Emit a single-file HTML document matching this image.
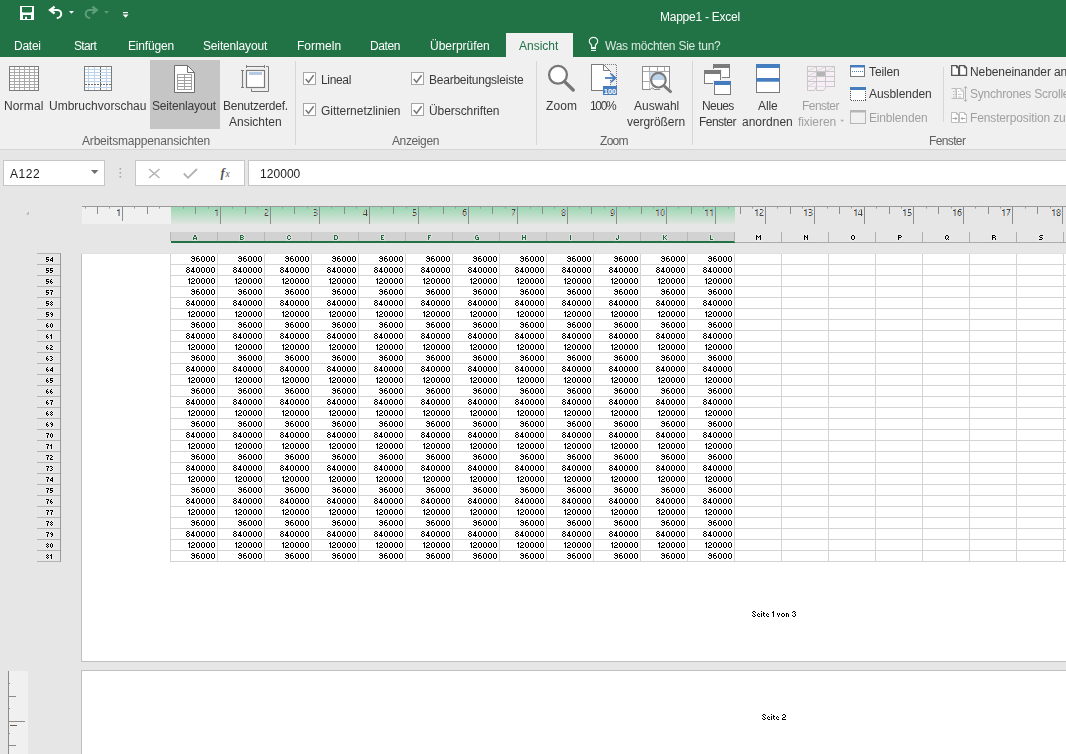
<!DOCTYPE html><html><head><meta charset="utf-8"><style>
*{margin:0;padding:0;box-sizing:border-box}
html,body{width:1066px;height:754px;overflow:hidden;background:#e6e6e6;font-family:"Liberation Sans",sans-serif}
body{position:relative}
.a{position:absolute;white-space:nowrap}
.x{position:absolute;white-space:nowrap;font-family:"Liberation Sans",sans-serif;will-change:transform}
svg{position:absolute;overflow:visible}
</style></head><body><div class="a" style="left:0px;top:0px;width:1066px;height:57px;background:#217346;"></div><div class="a" style="left:506px;top:33px;width:67px;height:24px;background:#f0f0f0;"></div><div class="a" style="left:0px;top:57px;width:1066px;height:92px;background:#f0f0f0;"></div><div class="a" style="left:0px;top:149px;width:1066px;height:1px;background:#d5d5d5;"></div><svg style="left:0;top:0" width="140" height="30">
<rect x="20" y="6" width="14" height="14" fill="#fff"/>
<path d="M22 7h10v4.6l-0.8 0.8h-8.4l-0.8-0.8z" fill="#217346"/>
<path d="M23 15h8v4h-4v-2.2h-2v2.2h-2z" fill="#217346"/>
<path d="M50.5 10.05H57.5A3.93 3.93 0 0 1 57.5 17.9H56.8" fill="none" stroke="#fff" stroke-width="2"/>
<path d="M54.6 6.6L50.1 10.05L54.6 13.5" fill="none" stroke="#fff" stroke-width="2.3"/>
<path d="M69 11h5l-2.5 2.8z" fill="#fff"/>
<path d="M96.4 10.05H89.4A3.93 3.93 0 0 0 89.4 17.9H90.1" fill="none" stroke="#5f9e7b" stroke-width="2"/>
<path d="M92.3 6.6L96.8 10.05L92.3 13.5" fill="none" stroke="#5f9e7b" stroke-width="2.3"/>
<path d="M104 11h5l-2.5 2.8z" fill="#5d9c78"/>
<rect x="123" y="12" width="5" height="1.2" fill="#fff"/>
<path d="M122.6 14.6h6l-3 3.2z" fill="#fff"/>
</svg><svg style="left:0;top:0" width="1066" height="60">
<path d="M591.6 47.5V45.6C591.6 44.4 589.3 43.4 589.3 41.5A4.2 4.2 0 0 1 597.7 41.5C597.7 43.4 595.4 44.4 595.4 45.6V47.5" fill="none" stroke="#eef5f0" stroke-width="1.2"/>
<rect x="591" y="47" width="5" height="2" fill="#eef5f0"/>
<rect x="591" y="49.9" width="5" height="1.1" fill="#eef5f0"/>
</svg><div class="a" style="left:150px;top:60px;width:70px;height:69px;background:#c5c5c5;"></div><svg style="left:0;top:0" width="1066" height="150"><rect x="9.5" y="66.5" width="29" height="24" fill="#fff" stroke="#7b7b7b"/><path d="M14.5 67v23" stroke="#a9a9a9"/><path d="M19.5 67v23" stroke="#a9a9a9"/><path d="M24.5 67v23" stroke="#a9a9a9"/><path d="M29.5 67v23" stroke="#a9a9a9"/><path d="M34.5 67v23" stroke="#a9a9a9"/><path d="M10 69.5h28" stroke="#a9a9a9"/><path d="M10 72.5h28" stroke="#a9a9a9"/><path d="M10 75.5h28" stroke="#a9a9a9"/><path d="M10 78.5h28" stroke="#a9a9a9"/><path d="M10 81.5h28" stroke="#a9a9a9"/><path d="M10 84.5h28" stroke="#a9a9a9"/><path d="M10 87.5h28" stroke="#a9a9a9"/><rect x="84.5" y="66.5" width="27" height="24" fill="#fff"/><path d="M88.5 67v23" stroke="#bcd3ea"/><path d="M94.5 67v23" stroke="#bcd3ea"/><path d="M106.5 67v23" stroke="#bcd3ea"/><path d="M85 69.5h26" stroke="#bcd3ea"/><path d="M85 72.5h26" stroke="#bcd3ea"/><path d="M85 75.5h26" stroke="#bcd3ea"/><path d="M85 78.5h26" stroke="#bcd3ea"/><path d="M85 81.5h26" stroke="#bcd3ea"/><path d="M85 87.5h26" stroke="#bcd3ea"/><path d="M100.5 67v23" stroke="#6a6a6a" stroke-dasharray="2 1"/><path d="M85 84.5h26" stroke="#6a6a6a" stroke-dasharray="2 1"/><rect x="84.5" y="66.5" width="27" height="24" fill="none" stroke="#7b7b7b"/><path d="M174.5 65.5h13l7 7v20h-20z" fill="#fff" stroke="#6f6f6f"/><path d="M187.5 65.5v7h7" fill="none" stroke="#6f6f6f"/><rect x="177.5" y="74.5" width="14" height="15" fill="#fff" stroke="#a0a0a0"/><path d="M184.5 75v14" stroke="#a0a0a0"/><path d="M178 77.5h13" stroke="#a0a0a0"/><path d="M178 80.5h13" stroke="#a0a0a0"/><path d="M178 83.5h13" stroke="#a0a0a0"/><path d="M178 86.5h13" stroke="#a0a0a0"/><rect x="246.5" y="70.5" width="18" height="17" fill="#fff" stroke="#7b7b7b" stroke-width="1.2"/><rect x="249" y="72" width="13" height="3" fill="#b4cbe3"/><path d="M242.5 70v18M241 70.5h3M241 87.5h3" stroke="#7b7b7b" stroke-width="1.1"/><path d="M246 66.5h19M246.5 65v3M264.5 65v3" stroke="#7b7b7b"/><path d="M251.5 88.8v2.7h17V66.5h-2.5" fill="none" stroke="#7b7b7b"/><path d="M295.5 61v84" stroke="#d7d7d7"/><path d="M536.5 61v84" stroke="#d7d7d7"/><path d="M692.5 61v84" stroke="#d7d7d7"/><path d="M943.5 67v55" stroke="#d7d7d7"/><rect x="303.5" y="72.5" width="12" height="12" fill="#fff" stroke="#a6a6a6"/><path d="M305.7 79.1l2.8 3.1l5.1-6.9" fill="none" stroke="#777" stroke-width="1.5"/><rect x="303.5" y="103.5" width="12" height="12" fill="#fff" stroke="#a6a6a6"/><path d="M305.7 110.1l2.8 3.1l5.1-6.9" fill="none" stroke="#777" stroke-width="1.5"/><rect x="411.5" y="72.5" width="12" height="12" fill="#fff" stroke="#a6a6a6"/><path d="M413.7 79.1l2.8 3.1l5.1-6.9" fill="none" stroke="#777" stroke-width="1.5"/><rect x="411.5" y="103.5" width="12" height="12" fill="#fff" stroke="#a6a6a6"/><path d="M413.7 110.1l2.8 3.1l5.1-6.9" fill="none" stroke="#777" stroke-width="1.5"/><circle cx="558" cy="74.8" r="8.9" fill="#fff" stroke="#767676" stroke-width="2.3"/><path d="M564.6 81.6l8.6 8.4" stroke="#767676" stroke-width="3.4" stroke-linecap="round"/><path d="M591.5 64.5h12l7 7v0M610.5 71.5M591.5 64.5v26h12" fill="#fff" stroke="#7b7b7b"/><path d="M592 65h11.5l6.5 6.5v19h-18z" fill="#fff"/><path d="M591.5 64.5h12l7 7M591.5 64.5v26h12" fill="none" stroke="#7b7b7b"/><path d="M603.5 64.5v6h6" fill="none" stroke="#7b7b7b"/><path d="M605 64.5h12M616.5 65v21M610.5 71v4M610.5 80v5" fill="none" stroke="#7b7b7b" stroke-dasharray="1 1" shape-rendering="crispEdges"/><path d="M605 78h9" stroke="#467dbf" stroke-width="1.8"/><path d="M611 73.8l4.4 4.2l-4.4 4.2" fill="none" stroke="#467dbf" stroke-width="1.8"/><rect x="603" y="86" width="14" height="9" fill="#467dbf"/><text x="610" y="93.6" font-family="Liberation Sans" font-size="7.5" font-weight="bold" fill="#fff" text-anchor="middle">100</text><path d="M642.5 89.5v-23h27v21" fill="#fff" stroke="#8a8a8a"/><path d="M643 67h26v21h-26z" fill="#fff"/><path d="M642.5 66.5h27v22M642.5 66.5v23h8l1-1.5h1.5l1 1.5h6" fill="none" stroke="#8a8a8a"/><path d="M649.5 67v4" stroke="#a9a9a9"/><path d="M657.5 67v4" stroke="#a9a9a9"/><path d="M664.5 67v4" stroke="#a9a9a9"/><path d="M643 71.5h26M643 81.5h6" stroke="#a9a9a9"/><path d="M649.5 72v17" stroke="#c0c0c0"/><rect x="650" y="72" width="6" height="5" fill="#c6daf0"/><circle cx="658.4" cy="80.2" r="8.6" fill="#fff"/><path d="M652 80a6.4 6.4 0 0 1 12.8 0z" fill="#bcd3ea"/><circle cx="658.4" cy="80.2" r="7.3" fill="none" stroke="#7b7b7b" stroke-width="2.2"/><path d="M664.2 86l6.3 5.6" stroke="#7b7b7b" stroke-width="3" stroke-linecap="round"/><rect x="713.5" y="64.5" width="16" height="13" fill="#fff" stroke="#7b7b7b"/><rect x="713" y="64" width="17" height="4" fill="#7b7b7b"/><rect x="703" y="69" width="19" height="16" fill="#f0f0f0"/><rect x="704.5" y="70.5" width="16" height="13" fill="#fff" stroke="#7b7b7b"/><rect x="704" y="70" width="17" height="4" fill="#7b7b7b"/><rect x="713" y="80" width="19" height="16" fill="#f0f0f0"/><rect x="714.5" y="81.5" width="16" height="13" fill="#fff" stroke="#7b7b7b"/><rect x="714" y="81" width="17" height="4" fill="#467dbf"/><rect x="756.5" y="64.5" width="23" height="28" fill="#fff" stroke="#7b7b7b"/><rect x="756" y="64" width="24" height="4" fill="#467dbf"/><rect x="756" y="78" width="24" height="3.7" fill="#467dbf"/><rect x="807.5" y="66.5" width="27" height="20" fill="#f7eff5" stroke="#c8c8c8"/><path d="M816.5 67v19" stroke="#c8c8c8"/><path d="M825.5 67v19" stroke="#c8c8c8"/><path d="M808 71.5h26" stroke="#c8c8c8"/><path d="M808 76.5h26" stroke="#c8c8c8"/><path d="M808 81.5h26" stroke="#c8c8c8"/><rect x="817" y="72" width="8" height="4" fill="#b5b5b5"/><path d="M808 71l8-4M808 76l8-4M808 81l8-4M808 86l8-4M817 71l8-4M826 71l8-4" stroke="#cfcfcf" stroke-width="0.8"/><path d="M807.5 86.5v4h7l2-4M816.5 86.5v4h7l3-4" fill="#f7eff5" stroke="#c8c8c8"/><path d="M840.2 119.8h4l-2 2.2z" fill="#b0b0b0"/><rect x="850.5" y="65.5" width="14" height="11" fill="#fff" stroke="#7b7b7b"/><rect x="850" y="65" width="15" height="2.5" fill="#467dbf"/><path d="M852 71.5h11" stroke="#467dbf" stroke-dasharray="1 1"/><rect x="850.5" y="87.5" width="15" height="13" fill="#fff" stroke="#555" stroke-dasharray="1 1" shape-rendering="crispEdges"/><rect x="850" y="87" width="16" height="3" fill="#467dbf"/><rect x="850.5" y="110.5" width="15" height="13" fill="none" stroke="#b5b5b5"/><rect x="850" y="110" width="16" height="2.5" fill="#b5b5b5"/><path d="M951.7 65.7h5l2 2v7.6h-7z M959.5 65.7h5l2 2v7.6h-7z" fill="#fff" stroke="#555" stroke-width="1.3"/><path d="M956.5 65.7v2.2h2.2M964.3 65.7v2.2h2.2" fill="none" stroke="#555" stroke-width="1"/><path d="M951.5 88.5h4.5v10h-4.5" fill="none" stroke="#bdbdbd"/><path d="M956.5 88.5h4.5l2.5 2.5v7.5h-7z" fill="#fff" stroke="#bdbdbd"/><path d="M953 91.5h1.5M953 94.5h1.5M953 97h1.5M958 91.5h1M958 94.5h3.5M958 97h3.5M961 88.5v2.5h2.5" fill="none" stroke="#c4c4c4"/><path d="M965.5 86.5v15M963.8 88.3l1.7-1.8l1.7 1.8M963.8 99.7l1.7 1.8l1.7-1.8" fill="none" stroke="#b5b5b5"/><path d="M951.5 112.5h5l2 2v8h-7z M959.5 112.5h5l2 2v8h-7z" fill="#fff" stroke="#bdbdbd"/><path d="M956.5 112.5v2h2M964.5 112.5v2h2" fill="none" stroke="#bdbdbd"/><path d="M952.5 118.5h4.5M955.3 117l1.5 1.5l-1.5 1.5M965.5 118.5h-4.5M962.7 117l-1.5 1.5l1.5 1.5" fill="none" stroke="#a8a8a8"/></svg><div class="a" style="left:3px;top:160px;width:102px;height:26px;background:#fff;border:1px solid #c6c6c6"></div><div class="a" style="left:135px;top:160px;width:110px;height:26px;background:#fff;border:1px solid #c6c6c6"></div><div class="a" style="left:248px;top:160px;width:830px;height:26px;background:#fff;border:1px solid #c6c6c6"></div><svg style="left:0;top:0" width="1066" height="260"><path d="M91 170h7.4l-3.7 4z" fill="#6d6d6d"/><rect x="119.5" y="168" width="1.6" height="1.6" fill="#a8a8a8"/><rect x="119.5" y="172" width="1.6" height="1.6" fill="#a8a8a8"/><rect x="119.5" y="176" width="1.6" height="1.6" fill="#a8a8a8"/><path d="M149 169l10.5 9M159.5 169l-10.5 9" stroke="#b0b0b0" stroke-width="1.4"/><path d="M183.8 173.5l4.2 4.3l9-8.8" fill="none" stroke="#b0b0b0" stroke-width="1.8"/><text x="220.5" y="177" font-family="Liberation Serif" font-style="italic" font-weight="bold" font-size="13" fill="#555">f</text><text x="225.5" y="177" font-family="Liberation Serif" font-style="italic" font-size="9.5" fill="#555">x</text><path d="M29 211.5v3h-3z" fill="#b0b0b0"/></svg><div class="a" style="left:81px;top:253px;width:985px;height:1px;background:#e1e1e1;"></div><div class="a" style="left:81px;top:254px;width:985px;height:408px;background:#fff;border-left:1px solid #c0c0c0;border-bottom:1px solid #c0c0c0"></div><div class="a" style="left:81px;top:670px;width:985px;height:84px;background:#fff;border-left:1px solid #c0c0c0;border-top:1px solid #c0c0c0"></div><div class="a" style="left:82px;top:206px;width:89px;height:18px;background:#f0f0f0;"></div><div class="a" style="left:171px;top:206px;width:564px;height:18px;background:linear-gradient(#98d6af,#dfe5e0)"></div><div class="a" style="left:82px;top:206px;width:984px;height:1px;background:#9a9a9a;"></div><svg style="left:0;top:0" width="1066" height="260"><path d="M85.5 207v1.6" stroke="#9a9a9a"/><path d="M97.5 207v7" stroke="#8c8c8c"/><path d="M109.5 207v1.6" stroke="#9a9a9a"/><path d="M122.5 207v14" stroke="#8c8c8c"/><path d="M134.5 207v1.6" stroke="#9a9a9a"/><path d="M147.5 207v7" stroke="#8c8c8c"/><path d="M159.5 207v1.6" stroke="#9a9a9a"/><path d="M183.5 207v1.6" stroke="#9a9a9a"/><path d="M195.5 207v7" stroke="#8c8c8c"/><path d="M208.5 207v1.6" stroke="#9a9a9a"/><path d="M220.5 207v17" stroke="#8c8c8c"/><path d="M232.5 207v1.6" stroke="#9a9a9a"/><path d="M245.5 207v7" stroke="#8c8c8c"/><path d="M257.5 207v1.6" stroke="#9a9a9a"/><path d="M270.5 207v17" stroke="#8c8c8c"/><path d="M282.5 207v1.6" stroke="#9a9a9a"/><path d="M294.5 207v7" stroke="#8c8c8c"/><path d="M307.5 207v1.6" stroke="#9a9a9a"/><path d="M319.5 207v17" stroke="#8c8c8c"/><path d="M331.5 207v1.6" stroke="#9a9a9a"/><path d="M344.5 207v7" stroke="#8c8c8c"/><path d="M356.5 207v1.6" stroke="#9a9a9a"/><path d="M369.5 207v17" stroke="#8c8c8c"/><path d="M381.5 207v1.6" stroke="#9a9a9a"/><path d="M393.5 207v7" stroke="#8c8c8c"/><path d="M406.5 207v1.6" stroke="#9a9a9a"/><path d="M418.5 207v17" stroke="#8c8c8c"/><path d="M430.5 207v1.6" stroke="#9a9a9a"/><path d="M443.5 207v7" stroke="#8c8c8c"/><path d="M455.5 207v1.6" stroke="#9a9a9a"/><path d="M468.5 207v17" stroke="#8c8c8c"/><path d="M480.5 207v1.6" stroke="#9a9a9a"/><path d="M492.5 207v7" stroke="#8c8c8c"/><path d="M505.5 207v1.6" stroke="#9a9a9a"/><path d="M517.5 207v17" stroke="#8c8c8c"/><path d="M530.5 207v1.6" stroke="#9a9a9a"/><path d="M542.5 207v7" stroke="#8c8c8c"/><path d="M554.5 207v1.6" stroke="#9a9a9a"/><path d="M567.5 207v17" stroke="#8c8c8c"/><path d="M579.5 207v1.6" stroke="#9a9a9a"/><path d="M591.5 207v7" stroke="#8c8c8c"/><path d="M604.5 207v1.6" stroke="#9a9a9a"/><path d="M616.5 207v17" stroke="#8c8c8c"/><path d="M629.5 207v1.6" stroke="#9a9a9a"/><path d="M641.5 207v7" stroke="#8c8c8c"/><path d="M653.5 207v1.6" stroke="#9a9a9a"/><path d="M666.5 207v17" stroke="#8c8c8c"/><path d="M678.5 207v1.6" stroke="#9a9a9a"/><path d="M691.5 207v7" stroke="#8c8c8c"/><path d="M703.5 207v1.6" stroke="#9a9a9a"/><path d="M715.5 207v17" stroke="#8c8c8c"/><path d="M728.5 207v1.6" stroke="#9a9a9a"/><path d="M740.5 207v7" stroke="#8c8c8c"/><path d="M752.5 207v1.6" stroke="#9a9a9a"/><path d="M765.5 207v17" stroke="#8c8c8c"/><path d="M777.5 207v1.6" stroke="#9a9a9a"/><path d="M790.5 207v7" stroke="#8c8c8c"/><path d="M802.5 207v1.6" stroke="#9a9a9a"/><path d="M814.5 207v17" stroke="#8c8c8c"/><path d="M827.5 207v1.6" stroke="#9a9a9a"/><path d="M839.5 207v7" stroke="#8c8c8c"/><path d="M851.5 207v1.6" stroke="#9a9a9a"/><path d="M864.5 207v17" stroke="#8c8c8c"/><path d="M876.5 207v1.6" stroke="#9a9a9a"/><path d="M889.5 207v7" stroke="#8c8c8c"/><path d="M901.5 207v1.6" stroke="#9a9a9a"/><path d="M913.5 207v17" stroke="#8c8c8c"/><path d="M926.5 207v1.6" stroke="#9a9a9a"/><path d="M938.5 207v7" stroke="#8c8c8c"/><path d="M951.5 207v1.6" stroke="#9a9a9a"/><path d="M963.5 207v17" stroke="#8c8c8c"/><path d="M975.5 207v1.6" stroke="#9a9a9a"/><path d="M988.5 207v7" stroke="#8c8c8c"/><path d="M1000.5 207v1.6" stroke="#9a9a9a"/><path d="M1012.5 207v17" stroke="#8c8c8c"/><path d="M1025.5 207v1.6" stroke="#9a9a9a"/><path d="M1037.5 207v7" stroke="#8c8c8c"/><path d="M1050.5 207v1.6" stroke="#9a9a9a"/><path d="M1062.5 207v17" stroke="#8c8c8c"/></svg><svg style="left:0;top:0" width="1066" height="260" shape-rendering="crispEdges"><path fill="#d9a466" d="M118 209h1v1h-1zM118 211h1v1h-1zM118 212h1v1h-1zM118 213h1v1h-1zM118 214h1v1h-1zM118 215h1v1h-1zM216 209h1v1h-1zM216 211h1v1h-1zM216 212h1v1h-1zM216 213h1v1h-1zM216 214h1v1h-1zM216 215h1v1h-1zM267 210h1v1h-1zM267 211h1v1h-1zM266 212h1v1h-1zM264 214h1v1h-1zM264 215h1v1h-1zM313 209h1v1h-1zM316 210h1v1h-1zM316 211h1v1h-1zM316 213h1v1h-1zM316 214h1v1h-1zM313 215h1v1h-1zM365 209h1v1h-1zM364 210h1v1h-1zM363 212h1v1h-1zM363 213h1v1h-1zM415 213h1v1h-1zM415 214h1v1h-1zM412 215h1v1h-1zM462 211h1v1h-1zM462 212h1v1h-1zM465 212h1v1h-1zM462 213h1v1h-1zM465 213h1v1h-1zM462 214h1v1h-1zM465 214h1v1h-1zM463 215h1v1h-1zM511 209h1v1h-1zM513 211h1v1h-1zM513 212h1v1h-1zM512 213h1v1h-1zM512 214h1v1h-1zM512 215h1v1h-1zM562 209h1v1h-1zM561 210h1v1h-1zM564 210h1v1h-1zM561 211h1v1h-1zM564 211h1v1h-1zM562 212h1v1h-1zM561 213h1v1h-1zM564 213h1v1h-1zM561 214h1v1h-1zM564 214h1v1h-1zM611 209h1v1h-1zM610 210h1v1h-1zM613 210h1v1h-1zM610 211h1v1h-1zM613 211h1v1h-1zM610 212h1v1h-1zM613 212h1v1h-1zM613 213h1v1h-1zM613 214h1v1h-1zM610 215h1v1h-1zM661 209h1v1h-1zM660 210h1v1h-1zM663 210h1v1h-1zM660 211h1v1h-1zM663 211h1v1h-1zM660 212h1v1h-1zM663 212h1v1h-1zM660 213h1v1h-1zM663 213h1v1h-1zM660 214h1v1h-1zM663 214h1v1h-1zM661 215h1v1h-1zM657 209h1v1h-1zM657 211h1v1h-1zM657 212h1v1h-1zM657 213h1v1h-1zM657 214h1v1h-1zM657 215h1v1h-1zM711 209h1v1h-1zM711 211h1v1h-1zM711 212h1v1h-1zM711 213h1v1h-1zM711 214h1v1h-1zM711 215h1v1h-1zM706 209h1v1h-1zM706 211h1v1h-1zM706 212h1v1h-1zM706 213h1v1h-1zM706 214h1v1h-1zM706 215h1v1h-1zM762 210h1v1h-1zM762 211h1v1h-1zM761 212h1v1h-1zM759 214h1v1h-1zM759 215h1v1h-1zM756 209h1v1h-1zM756 211h1v1h-1zM756 212h1v1h-1zM756 213h1v1h-1zM756 214h1v1h-1zM756 215h1v1h-1zM808 209h1v1h-1zM811 210h1v1h-1zM811 211h1v1h-1zM811 213h1v1h-1zM811 214h1v1h-1zM808 215h1v1h-1zM805 209h1v1h-1zM805 211h1v1h-1zM805 212h1v1h-1zM805 213h1v1h-1zM805 214h1v1h-1zM805 215h1v1h-1zM860 209h1v1h-1zM859 210h1v1h-1zM858 212h1v1h-1zM858 213h1v1h-1zM855 209h1v1h-1zM855 211h1v1h-1zM855 212h1v1h-1zM855 213h1v1h-1zM855 214h1v1h-1zM855 215h1v1h-1zM910 213h1v1h-1zM910 214h1v1h-1zM907 215h1v1h-1zM904 209h1v1h-1zM904 211h1v1h-1zM904 212h1v1h-1zM904 213h1v1h-1zM904 214h1v1h-1zM904 215h1v1h-1zM957 211h1v1h-1zM957 212h1v1h-1zM960 212h1v1h-1zM957 213h1v1h-1zM960 213h1v1h-1zM957 214h1v1h-1zM960 214h1v1h-1zM958 215h1v1h-1zM954 209h1v1h-1zM954 211h1v1h-1zM954 212h1v1h-1zM954 213h1v1h-1zM954 214h1v1h-1zM954 215h1v1h-1zM1006 209h1v1h-1zM1008 211h1v1h-1zM1008 212h1v1h-1zM1007 213h1v1h-1zM1007 214h1v1h-1zM1007 215h1v1h-1zM1003 209h1v1h-1zM1003 211h1v1h-1zM1003 212h1v1h-1zM1003 213h1v1h-1zM1003 214h1v1h-1zM1003 215h1v1h-1zM1057 209h1v1h-1zM1056 210h1v1h-1zM1059 210h1v1h-1zM1056 211h1v1h-1zM1059 211h1v1h-1zM1057 212h1v1h-1zM1056 213h1v1h-1zM1059 213h1v1h-1zM1056 214h1v1h-1zM1059 214h1v1h-1zM1053 209h1v1h-1zM1053 211h1v1h-1zM1053 212h1v1h-1zM1053 213h1v1h-1zM1053 214h1v1h-1zM1053 215h1v1h-1z"/><path fill="#62a2e2" d="M119 209h1v1h-1zM119 210h1v1h-1zM119 211h1v1h-1zM119 212h1v1h-1zM119 213h1v1h-1zM119 214h1v1h-1zM119 215h1v1h-1zM217 209h1v1h-1zM217 210h1v1h-1zM217 211h1v1h-1zM217 212h1v1h-1zM217 213h1v1h-1zM217 214h1v1h-1zM217 215h1v1h-1zM267 209h1v1h-1zM268 210h1v1h-1zM267 212h1v1h-1zM266 213h1v1h-1zM265 214h1v1h-1zM268 215h1v1h-1zM316 209h1v1h-1zM317 210h1v1h-1zM316 212h1v1h-1zM317 213h1v1h-1zM317 214h1v1h-1zM316 215h1v1h-1zM366 209h1v1h-1zM364 211h1v1h-1zM367 214h1v1h-1zM413 210h1v1h-1zM413 211h1v1h-1zM416 213h1v1h-1zM416 214h1v1h-1zM415 215h1v1h-1zM466 209h1v1h-1zM463 212h1v1h-1zM466 212h1v1h-1zM463 213h1v1h-1zM466 213h1v1h-1zM463 214h1v1h-1zM466 214h1v1h-1zM465 215h1v1h-1zM515 209h1v1h-1zM514 211h1v1h-1zM514 212h1v1h-1zM513 213h1v1h-1zM513 214h1v1h-1zM564 209h1v1h-1zM562 210h1v1h-1zM565 210h1v1h-1zM562 211h1v1h-1zM565 211h1v1h-1zM564 212h1v1h-1zM562 213h1v1h-1zM565 213h1v1h-1zM562 214h1v1h-1zM565 214h1v1h-1zM613 209h1v1h-1zM611 210h1v1h-1zM614 210h1v1h-1zM611 211h1v1h-1zM614 211h1v1h-1zM611 212h1v1h-1zM614 212h1v1h-1zM614 213h1v1h-1zM614 214h1v1h-1zM613 215h1v1h-1zM663 209h1v1h-1zM661 210h1v1h-1zM664 210h1v1h-1zM661 211h1v1h-1zM664 211h1v1h-1zM661 212h1v1h-1zM664 212h1v1h-1zM661 213h1v1h-1zM664 213h1v1h-1zM661 214h1v1h-1zM664 214h1v1h-1zM663 215h1v1h-1zM658 209h1v1h-1zM658 210h1v1h-1zM658 211h1v1h-1zM658 212h1v1h-1zM658 213h1v1h-1zM658 214h1v1h-1zM658 215h1v1h-1zM712 209h1v1h-1zM712 210h1v1h-1zM712 211h1v1h-1zM712 212h1v1h-1zM712 213h1v1h-1zM712 214h1v1h-1zM712 215h1v1h-1zM707 209h1v1h-1zM707 210h1v1h-1zM707 211h1v1h-1zM707 212h1v1h-1zM707 213h1v1h-1zM707 214h1v1h-1zM707 215h1v1h-1zM762 209h1v1h-1zM763 210h1v1h-1zM762 212h1v1h-1zM761 213h1v1h-1zM760 214h1v1h-1zM763 215h1v1h-1zM757 209h1v1h-1zM757 210h1v1h-1zM757 211h1v1h-1zM757 212h1v1h-1zM757 213h1v1h-1zM757 214h1v1h-1zM757 215h1v1h-1zM811 209h1v1h-1zM812 210h1v1h-1zM811 212h1v1h-1zM812 213h1v1h-1zM812 214h1v1h-1zM811 215h1v1h-1zM806 209h1v1h-1zM806 210h1v1h-1zM806 211h1v1h-1zM806 212h1v1h-1zM806 213h1v1h-1zM806 214h1v1h-1zM806 215h1v1h-1zM861 209h1v1h-1zM859 211h1v1h-1zM862 214h1v1h-1zM856 209h1v1h-1zM856 210h1v1h-1zM856 211h1v1h-1zM856 212h1v1h-1zM856 213h1v1h-1zM856 214h1v1h-1zM856 215h1v1h-1zM908 210h1v1h-1zM908 211h1v1h-1zM911 213h1v1h-1zM911 214h1v1h-1zM910 215h1v1h-1zM905 209h1v1h-1zM905 210h1v1h-1zM905 211h1v1h-1zM905 212h1v1h-1zM905 213h1v1h-1zM905 214h1v1h-1zM905 215h1v1h-1zM961 209h1v1h-1zM958 212h1v1h-1zM961 212h1v1h-1zM958 213h1v1h-1zM961 213h1v1h-1zM958 214h1v1h-1zM961 214h1v1h-1zM960 215h1v1h-1zM955 209h1v1h-1zM955 210h1v1h-1zM955 211h1v1h-1zM955 212h1v1h-1zM955 213h1v1h-1zM955 214h1v1h-1zM955 215h1v1h-1zM1010 209h1v1h-1zM1009 211h1v1h-1zM1009 212h1v1h-1zM1008 213h1v1h-1zM1008 214h1v1h-1zM1004 209h1v1h-1zM1004 210h1v1h-1zM1004 211h1v1h-1zM1004 212h1v1h-1zM1004 213h1v1h-1zM1004 214h1v1h-1zM1004 215h1v1h-1zM1059 209h1v1h-1zM1057 210h1v1h-1zM1060 210h1v1h-1zM1057 211h1v1h-1zM1060 211h1v1h-1zM1059 212h1v1h-1zM1057 213h1v1h-1zM1060 213h1v1h-1zM1057 214h1v1h-1zM1060 214h1v1h-1zM1054 209h1v1h-1zM1054 210h1v1h-1zM1054 211h1v1h-1zM1054 212h1v1h-1zM1054 213h1v1h-1zM1054 214h1v1h-1zM1054 215h1v1h-1z"/><path fill="#4f4239" d="M117 210h1v1h-1zM118 210h1v1h-1zM215 210h1v1h-1zM216 210h1v1h-1zM265 209h1v1h-1zM266 209h1v1h-1zM265 213h1v1h-1zM265 215h1v1h-1zM266 215h1v1h-1zM267 215h1v1h-1zM314 209h1v1h-1zM315 209h1v1h-1zM314 212h1v1h-1zM315 212h1v1h-1zM314 215h1v1h-1zM315 215h1v1h-1zM366 210h1v1h-1zM366 211h1v1h-1zM366 212h1v1h-1zM366 213h1v1h-1zM363 214h1v1h-1zM364 214h1v1h-1zM365 214h1v1h-1zM366 214h1v1h-1zM366 215h1v1h-1zM413 209h1v1h-1zM414 209h1v1h-1zM415 209h1v1h-1zM413 212h1v1h-1zM414 212h1v1h-1zM415 212h1v1h-1zM413 215h1v1h-1zM414 215h1v1h-1zM464 209h1v1h-1zM465 209h1v1h-1zM463 210h1v1h-1zM463 211h1v1h-1zM464 211h1v1h-1zM465 211h1v1h-1zM464 215h1v1h-1zM512 209h1v1h-1zM513 209h1v1h-1zM514 209h1v1h-1zM514 210h1v1h-1zM563 209h1v1h-1zM563 212h1v1h-1zM562 215h1v1h-1zM563 215h1v1h-1zM564 215h1v1h-1zM612 209h1v1h-1zM611 213h1v1h-1zM612 213h1v1h-1zM611 215h1v1h-1zM612 215h1v1h-1zM662 209h1v1h-1zM662 215h1v1h-1zM656 210h1v1h-1zM657 210h1v1h-1zM710 210h1v1h-1zM711 210h1v1h-1zM705 210h1v1h-1zM706 210h1v1h-1zM760 209h1v1h-1zM761 209h1v1h-1zM760 213h1v1h-1zM760 215h1v1h-1zM761 215h1v1h-1zM762 215h1v1h-1zM755 210h1v1h-1zM756 210h1v1h-1zM809 209h1v1h-1zM810 209h1v1h-1zM809 212h1v1h-1zM810 212h1v1h-1zM809 215h1v1h-1zM810 215h1v1h-1zM804 210h1v1h-1zM805 210h1v1h-1zM861 210h1v1h-1zM861 211h1v1h-1zM861 212h1v1h-1zM861 213h1v1h-1zM858 214h1v1h-1zM859 214h1v1h-1zM860 214h1v1h-1zM861 214h1v1h-1zM861 215h1v1h-1zM854 210h1v1h-1zM855 210h1v1h-1zM908 209h1v1h-1zM909 209h1v1h-1zM910 209h1v1h-1zM908 212h1v1h-1zM909 212h1v1h-1zM910 212h1v1h-1zM908 215h1v1h-1zM909 215h1v1h-1zM903 210h1v1h-1zM904 210h1v1h-1zM959 209h1v1h-1zM960 209h1v1h-1zM958 210h1v1h-1zM958 211h1v1h-1zM959 211h1v1h-1zM960 211h1v1h-1zM959 215h1v1h-1zM953 210h1v1h-1zM954 210h1v1h-1zM1007 209h1v1h-1zM1008 209h1v1h-1zM1009 209h1v1h-1zM1009 210h1v1h-1zM1002 210h1v1h-1zM1003 210h1v1h-1zM1058 209h1v1h-1zM1058 212h1v1h-1zM1057 215h1v1h-1zM1058 215h1v1h-1zM1059 215h1v1h-1zM1052 210h1v1h-1zM1053 210h1v1h-1z"/></svg><div class="a" style="left:171px;top:232px;width:564px;height:9px;background:#d2d2d2;"></div><div class="a" style="left:171px;top:241px;width:564px;height:2px;background:#217346;"></div><div class="a" style="left:735px;top:242px;width:331px;height:1px;background:#ababab;"></div><svg style="left:0;top:0" width="1066" height="260"><path d="M170.5 232v9" stroke="#b7b7b7"/><path d="M217.5 232v9" stroke="#b7b7b7"/><path d="M264.5 232v9" stroke="#b7b7b7"/><path d="M311.5 232v9" stroke="#b7b7b7"/><path d="M358.5 232v9" stroke="#b7b7b7"/><path d="M405.5 232v9" stroke="#b7b7b7"/><path d="M452.5 232v9" stroke="#b7b7b7"/><path d="M499.5 232v9" stroke="#b7b7b7"/><path d="M546.5 232v9" stroke="#b7b7b7"/><path d="M593.5 232v9" stroke="#b7b7b7"/><path d="M640.5 232v9" stroke="#b7b7b7"/><path d="M687.5 232v9" stroke="#b7b7b7"/><path d="M734.5 232v10" stroke="#b0b0b0"/><path d="M781.5 232v10" stroke="#b0b0b0"/><path d="M828.5 232v10" stroke="#b0b0b0"/><path d="M875.5 232v10" stroke="#b0b0b0"/><path d="M922.5 232v10" stroke="#b0b0b0"/><path d="M969.5 232v10" stroke="#b0b0b0"/><path d="M1016.5 232v10" stroke="#b0b0b0"/><path d="M1063.5 232v10" stroke="#b0b0b0"/></svg><svg style="left:0;top:0" width="1066" height="260" shape-rendering="crispEdges"><path fill="rgba(255,255,255,0.3)" d="M192 236h1v1h-1zM192 237h1v1h-1zM192 238h1v1h-1zM192 239h1v1h-1zM192 240h1v1h-1zM193 234h1v1h-1zM193 235h1v1h-1zM193 236h1v1h-1zM193 240h1v1h-1zM194 234h1v1h-1zM194 237h1v1h-1zM194 239h1v1h-1zM194 240h1v1h-1zM195 234h1v1h-1zM195 237h1v1h-1zM195 239h1v1h-1zM195 240h1v1h-1zM196 234h1v1h-1zM196 235h1v1h-1zM196 236h1v1h-1zM196 240h1v1h-1zM197 236h1v1h-1zM197 237h1v1h-1zM197 238h1v1h-1zM197 239h1v1h-1zM197 240h1v1h-1zM239 234h1v1h-1zM239 235h1v1h-1zM239 236h1v1h-1zM239 237h1v1h-1zM239 238h1v1h-1zM239 239h1v1h-1zM239 240h1v1h-1zM240 234h1v1h-1zM240 240h1v1h-1zM241 234h1v1h-1zM241 236h1v1h-1zM241 238h1v1h-1zM241 240h1v1h-1zM242 234h1v1h-1zM242 236h1v1h-1zM242 238h1v1h-1zM242 240h1v1h-1zM243 234h1v1h-1zM243 235h1v1h-1zM243 237h1v1h-1zM243 239h1v1h-1zM243 240h1v1h-1zM244 235h1v1h-1zM244 236h1v1h-1zM244 237h1v1h-1zM244 238h1v1h-1zM244 239h1v1h-1zM286 235h1v1h-1zM286 236h1v1h-1zM286 237h1v1h-1zM286 238h1v1h-1zM286 239h1v1h-1zM287 234h1v1h-1zM287 235h1v1h-1zM287 239h1v1h-1zM287 240h1v1h-1zM288 234h1v1h-1zM288 236h1v1h-1zM288 237h1v1h-1zM288 238h1v1h-1zM288 240h1v1h-1zM289 234h1v1h-1zM289 236h1v1h-1zM289 237h1v1h-1zM289 238h1v1h-1zM289 240h1v1h-1zM290 234h1v1h-1zM290 235h1v1h-1zM290 237h1v1h-1zM290 239h1v1h-1zM290 240h1v1h-1zM291 235h1v1h-1zM291 236h1v1h-1zM291 237h1v1h-1zM291 238h1v1h-1zM291 239h1v1h-1zM333 234h1v1h-1zM333 235h1v1h-1zM333 236h1v1h-1zM333 237h1v1h-1zM333 238h1v1h-1zM333 239h1v1h-1zM333 240h1v1h-1zM334 234h1v1h-1zM334 240h1v1h-1zM335 234h1v1h-1zM335 236h1v1h-1zM335 237h1v1h-1zM335 238h1v1h-1zM335 240h1v1h-1zM336 234h1v1h-1zM336 236h1v1h-1zM336 237h1v1h-1zM336 238h1v1h-1zM336 240h1v1h-1zM337 234h1v1h-1zM337 235h1v1h-1zM337 239h1v1h-1zM337 240h1v1h-1zM338 235h1v1h-1zM338 236h1v1h-1zM338 237h1v1h-1zM338 238h1v1h-1zM338 239h1v1h-1zM380 234h1v1h-1zM380 235h1v1h-1zM380 236h1v1h-1zM380 237h1v1h-1zM380 238h1v1h-1zM380 239h1v1h-1zM380 240h1v1h-1zM381 234h1v1h-1zM381 240h1v1h-1zM382 234h1v1h-1zM382 236h1v1h-1zM382 238h1v1h-1zM382 240h1v1h-1zM383 234h1v1h-1zM383 236h1v1h-1zM383 237h1v1h-1zM383 238h1v1h-1zM383 240h1v1h-1zM384 234h1v1h-1zM384 235h1v1h-1zM384 236h1v1h-1zM384 238h1v1h-1zM384 239h1v1h-1zM384 240h1v1h-1zM427 234h1v1h-1zM427 235h1v1h-1zM427 236h1v1h-1zM427 237h1v1h-1zM427 238h1v1h-1zM427 239h1v1h-1zM427 240h1v1h-1zM428 234h1v1h-1zM428 240h1v1h-1zM429 234h1v1h-1zM429 236h1v1h-1zM429 238h1v1h-1zM429 239h1v1h-1zM429 240h1v1h-1zM430 234h1v1h-1zM430 236h1v1h-1zM430 237h1v1h-1zM430 238h1v1h-1zM431 234h1v1h-1zM431 235h1v1h-1zM431 236h1v1h-1zM474 235h1v1h-1zM474 236h1v1h-1zM474 237h1v1h-1zM474 238h1v1h-1zM474 239h1v1h-1zM475 234h1v1h-1zM475 235h1v1h-1zM475 239h1v1h-1zM475 240h1v1h-1zM476 234h1v1h-1zM476 236h1v1h-1zM476 237h1v1h-1zM476 238h1v1h-1zM476 240h1v1h-1zM477 234h1v1h-1zM477 236h1v1h-1zM477 238h1v1h-1zM477 240h1v1h-1zM478 234h1v1h-1zM478 235h1v1h-1zM478 236h1v1h-1zM478 240h1v1h-1zM479 236h1v1h-1zM479 237h1v1h-1zM479 238h1v1h-1zM479 239h1v1h-1zM479 240h1v1h-1zM521 234h1v1h-1zM521 235h1v1h-1zM521 236h1v1h-1zM521 237h1v1h-1zM521 238h1v1h-1zM521 239h1v1h-1zM521 240h1v1h-1zM522 234h1v1h-1zM522 240h1v1h-1zM523 234h1v1h-1zM523 235h1v1h-1zM523 236h1v1h-1zM523 238h1v1h-1zM523 239h1v1h-1zM523 240h1v1h-1zM524 234h1v1h-1zM524 235h1v1h-1zM524 236h1v1h-1zM524 238h1v1h-1zM524 239h1v1h-1zM524 240h1v1h-1zM525 234h1v1h-1zM525 240h1v1h-1zM526 234h1v1h-1zM526 235h1v1h-1zM526 236h1v1h-1zM526 237h1v1h-1zM526 238h1v1h-1zM526 239h1v1h-1zM526 240h1v1h-1zM569 234h1v1h-1zM569 235h1v1h-1zM569 236h1v1h-1zM569 237h1v1h-1zM569 238h1v1h-1zM569 239h1v1h-1zM569 240h1v1h-1zM570 234h1v1h-1zM570 240h1v1h-1zM571 234h1v1h-1zM571 235h1v1h-1zM571 236h1v1h-1zM571 237h1v1h-1zM571 238h1v1h-1zM571 239h1v1h-1zM571 240h1v1h-1zM615 237h1v1h-1zM615 238h1v1h-1zM615 239h1v1h-1zM615 240h1v1h-1zM616 237h1v1h-1zM616 240h1v1h-1zM617 234h1v1h-1zM617 235h1v1h-1zM617 236h1v1h-1zM617 237h1v1h-1zM617 238h1v1h-1zM617 240h1v1h-1zM618 234h1v1h-1zM618 239h1v1h-1zM618 240h1v1h-1zM619 234h1v1h-1zM619 235h1v1h-1zM619 236h1v1h-1zM619 237h1v1h-1zM619 238h1v1h-1zM619 239h1v1h-1zM662 234h1v1h-1zM662 235h1v1h-1zM662 236h1v1h-1zM662 237h1v1h-1zM662 238h1v1h-1zM662 239h1v1h-1zM662 240h1v1h-1zM663 234h1v1h-1zM663 240h1v1h-1zM664 234h1v1h-1zM664 235h1v1h-1zM664 236h1v1h-1zM664 238h1v1h-1zM664 239h1v1h-1zM664 240h1v1h-1zM665 234h1v1h-1zM665 235h1v1h-1zM665 237h1v1h-1zM665 239h1v1h-1zM665 240h1v1h-1zM666 234h1v1h-1zM666 236h1v1h-1zM666 237h1v1h-1zM666 238h1v1h-1zM666 240h1v1h-1zM667 234h1v1h-1zM667 235h1v1h-1zM667 236h1v1h-1zM667 238h1v1h-1zM667 239h1v1h-1zM667 240h1v1h-1zM709 234h1v1h-1zM709 235h1v1h-1zM709 236h1v1h-1zM709 237h1v1h-1zM709 238h1v1h-1zM709 239h1v1h-1zM709 240h1v1h-1zM710 234h1v1h-1zM710 240h1v1h-1zM711 234h1v1h-1zM711 235h1v1h-1zM711 236h1v1h-1zM711 237h1v1h-1zM711 238h1v1h-1zM711 240h1v1h-1zM712 238h1v1h-1zM712 240h1v1h-1zM713 238h1v1h-1zM713 239h1v1h-1zM713 240h1v1h-1zM755 234h1v1h-1zM755 235h1v1h-1zM755 236h1v1h-1zM755 237h1v1h-1zM755 238h1v1h-1zM755 239h1v1h-1zM755 240h1v1h-1zM756 234h1v1h-1zM756 240h1v1h-1zM757 234h1v1h-1zM757 235h1v1h-1zM757 237h1v1h-1zM757 238h1v1h-1zM757 239h1v1h-1zM757 240h1v1h-1zM758 235h1v1h-1zM758 236h1v1h-1zM758 238h1v1h-1zM759 234h1v1h-1zM759 235h1v1h-1zM759 237h1v1h-1zM759 238h1v1h-1zM759 239h1v1h-1zM759 240h1v1h-1zM760 234h1v1h-1zM760 240h1v1h-1zM761 234h1v1h-1zM761 235h1v1h-1zM761 236h1v1h-1zM761 237h1v1h-1zM761 238h1v1h-1zM761 239h1v1h-1zM761 240h1v1h-1zM803 234h1v1h-1zM803 235h1v1h-1zM803 236h1v1h-1zM803 237h1v1h-1zM803 238h1v1h-1zM803 239h1v1h-1zM803 240h1v1h-1zM804 234h1v1h-1zM804 240h1v1h-1zM805 234h1v1h-1zM805 235h1v1h-1zM805 237h1v1h-1zM805 238h1v1h-1zM805 239h1v1h-1zM805 240h1v1h-1zM806 234h1v1h-1zM806 235h1v1h-1zM806 236h1v1h-1zM806 238h1v1h-1zM806 239h1v1h-1zM806 240h1v1h-1zM807 234h1v1h-1zM807 240h1v1h-1zM808 234h1v1h-1zM808 235h1v1h-1zM808 236h1v1h-1zM808 237h1v1h-1zM808 238h1v1h-1zM808 239h1v1h-1zM808 240h1v1h-1zM850 235h1v1h-1zM850 236h1v1h-1zM850 237h1v1h-1zM850 238h1v1h-1zM850 239h1v1h-1zM851 234h1v1h-1zM851 235h1v1h-1zM851 239h1v1h-1zM851 240h1v1h-1zM852 234h1v1h-1zM852 236h1v1h-1zM852 237h1v1h-1zM852 238h1v1h-1zM852 240h1v1h-1zM853 234h1v1h-1zM853 236h1v1h-1zM853 237h1v1h-1zM853 238h1v1h-1zM853 240h1v1h-1zM854 234h1v1h-1zM854 235h1v1h-1zM854 239h1v1h-1zM854 240h1v1h-1zM855 235h1v1h-1zM855 236h1v1h-1zM855 237h1v1h-1zM855 238h1v1h-1zM855 239h1v1h-1zM897 234h1v1h-1zM897 235h1v1h-1zM897 236h1v1h-1zM897 237h1v1h-1zM897 238h1v1h-1zM897 239h1v1h-1zM897 240h1v1h-1zM898 234h1v1h-1zM898 240h1v1h-1zM899 234h1v1h-1zM899 236h1v1h-1zM899 238h1v1h-1zM899 239h1v1h-1zM899 240h1v1h-1zM900 234h1v1h-1zM900 236h1v1h-1zM900 238h1v1h-1zM901 234h1v1h-1zM901 235h1v1h-1zM901 237h1v1h-1zM901 238h1v1h-1zM902 235h1v1h-1zM902 236h1v1h-1zM902 237h1v1h-1zM944 235h1v1h-1zM944 236h1v1h-1zM944 237h1v1h-1zM944 238h1v1h-1zM944 239h1v1h-1zM945 234h1v1h-1zM945 235h1v1h-1zM945 239h1v1h-1zM945 240h1v1h-1zM946 234h1v1h-1zM946 236h1v1h-1zM946 237h1v1h-1zM946 238h1v1h-1zM946 240h1v1h-1zM947 234h1v1h-1zM947 236h1v1h-1zM947 237h1v1h-1zM947 239h1v1h-1zM947 240h1v1h-1zM948 234h1v1h-1zM948 235h1v1h-1zM948 238h1v1h-1zM948 240h1v1h-1zM949 235h1v1h-1zM949 236h1v1h-1zM949 237h1v1h-1zM949 238h1v1h-1zM949 239h1v1h-1zM949 240h1v1h-1zM991 234h1v1h-1zM991 235h1v1h-1zM991 236h1v1h-1zM991 237h1v1h-1zM991 238h1v1h-1zM991 239h1v1h-1zM991 240h1v1h-1zM992 234h1v1h-1zM992 240h1v1h-1zM993 234h1v1h-1zM993 236h1v1h-1zM993 238h1v1h-1zM993 239h1v1h-1zM993 240h1v1h-1zM994 234h1v1h-1zM994 236h1v1h-1zM994 238h1v1h-1zM994 239h1v1h-1zM994 240h1v1h-1zM995 234h1v1h-1zM995 235h1v1h-1zM995 237h1v1h-1zM995 240h1v1h-1zM996 235h1v1h-1zM996 236h1v1h-1zM996 237h1v1h-1zM996 238h1v1h-1zM996 239h1v1h-1zM996 240h1v1h-1zM1038 235h1v1h-1zM1038 236h1v1h-1zM1038 237h1v1h-1zM1038 238h1v1h-1zM1038 239h1v1h-1zM1038 240h1v1h-1zM1039 234h1v1h-1zM1039 235h1v1h-1zM1039 237h1v1h-1zM1039 238h1v1h-1zM1039 240h1v1h-1zM1040 234h1v1h-1zM1040 236h1v1h-1zM1040 238h1v1h-1zM1040 240h1v1h-1zM1041 234h1v1h-1zM1041 236h1v1h-1zM1041 238h1v1h-1zM1041 240h1v1h-1zM1042 234h1v1h-1zM1042 236h1v1h-1zM1042 237h1v1h-1zM1042 239h1v1h-1zM1042 240h1v1h-1zM1043 234h1v1h-1zM1043 235h1v1h-1zM1043 236h1v1h-1zM1043 237h1v1h-1zM1043 238h1v1h-1zM1043 239h1v1h-1zM1085 234h1v1h-1zM1085 235h1v1h-1zM1085 236h1v1h-1zM1086 234h1v1h-1zM1086 236h1v1h-1zM1086 237h1v1h-1zM1086 238h1v1h-1zM1086 239h1v1h-1zM1086 240h1v1h-1zM1087 234h1v1h-1zM1087 240h1v1h-1zM1088 234h1v1h-1zM1088 236h1v1h-1zM1088 237h1v1h-1zM1088 238h1v1h-1zM1088 239h1v1h-1zM1088 240h1v1h-1zM1089 234h1v1h-1zM1089 235h1v1h-1zM1089 236h1v1h-1z"/><path fill="#1d6b3c" d="M194 235h2v1h-2zM194 236h2v1h-2zM193 237h1v1h-1zM196 237h1v1h-1zM193 238h4v1h-4zM193 239h1v1h-1zM196 239h1v1h-1zM240 235h3v1h-3zM240 236h1v1h-1zM243 236h1v1h-1zM240 237h3v1h-3zM240 238h1v1h-1zM243 238h1v1h-1zM240 239h3v1h-3zM288 235h2v1h-2zM287 236h1v1h-1zM290 236h1v1h-1zM287 237h1v1h-1zM287 238h1v1h-1zM290 238h1v1h-1zM288 239h2v1h-2zM334 235h3v1h-3zM334 236h1v1h-1zM337 236h1v1h-1zM334 237h1v1h-1zM337 237h1v1h-1zM334 238h1v1h-1zM337 238h1v1h-1zM334 239h3v1h-3zM381 235h3v1h-3zM381 236h1v1h-1zM381 237h2v1h-2zM381 238h1v1h-1zM381 239h3v1h-3zM428 235h3v1h-3zM428 236h1v1h-1zM428 237h2v1h-2zM428 238h1v1h-1zM428 239h1v1h-1zM476 235h2v1h-2zM475 236h1v1h-1zM475 237h1v1h-1zM477 237h2v1h-2zM475 238h1v1h-1zM478 238h1v1h-1zM476 239h3v1h-3zM522 235h1v1h-1zM525 235h1v1h-1zM522 236h1v1h-1zM525 236h1v1h-1zM522 237h4v1h-4zM522 238h1v1h-1zM525 238h1v1h-1zM522 239h1v1h-1zM525 239h1v1h-1zM570 235h1v1h-1zM570 236h1v1h-1zM570 237h1v1h-1zM570 238h1v1h-1zM570 239h1v1h-1zM618 235h1v1h-1zM618 236h1v1h-1zM618 237h1v1h-1zM616 238h1v1h-1zM618 238h1v1h-1zM616 239h2v1h-2zM663 235h1v1h-1zM666 235h1v1h-1zM663 236h1v1h-1zM665 236h1v1h-1zM663 237h2v1h-2zM663 238h1v1h-1zM665 238h1v1h-1zM663 239h1v1h-1zM666 239h1v1h-1zM710 235h1v1h-1zM710 236h1v1h-1zM710 237h1v1h-1zM710 238h1v1h-1zM710 239h3v1h-3z"/><path fill="#000" d="M756 235h1v1h-1zM760 235h1v1h-1zM756 236h2v1h-2zM759 236h2v1h-2zM756 237h1v1h-1zM758 237h1v1h-1zM760 237h1v1h-1zM756 238h1v1h-1zM760 238h1v1h-1zM756 239h1v1h-1zM760 239h1v1h-1zM804 235h1v1h-1zM807 235h1v1h-1zM804 236h2v1h-2zM807 236h1v1h-1zM804 237h1v1h-1zM806 237h2v1h-2zM804 238h1v1h-1zM807 238h1v1h-1zM804 239h1v1h-1zM807 239h1v1h-1zM852 235h2v1h-2zM851 236h1v1h-1zM854 236h1v1h-1zM851 237h1v1h-1zM854 237h1v1h-1zM851 238h1v1h-1zM854 238h1v1h-1zM852 239h2v1h-2zM898 235h3v1h-3zM898 236h1v1h-1zM901 236h1v1h-1zM898 237h3v1h-3zM898 238h1v1h-1zM898 239h1v1h-1zM946 235h2v1h-2zM945 236h1v1h-1zM948 236h1v1h-1zM945 237h1v1h-1zM948 237h1v1h-1zM945 238h1v1h-1zM947 238h1v1h-1zM946 239h1v1h-1zM948 239h1v1h-1zM992 235h3v1h-3zM992 236h1v1h-1zM995 236h1v1h-1zM992 237h3v1h-3zM992 238h1v1h-1zM995 238h1v1h-1zM992 239h1v1h-1zM995 239h1v1h-1zM1040 235h3v1h-3zM1039 236h1v1h-1zM1040 237h2v1h-2zM1042 238h1v1h-1zM1039 239h3v1h-3zM1086 235h3v1h-3zM1087 236h1v1h-1zM1087 237h1v1h-1zM1087 238h1v1h-1zM1087 239h1v1h-1z"/></svg><svg style="left:0;top:0" width="1066" height="754" shape-rendering="crispEdges"><path d="M37 253.5h23" stroke="#b4b4b4"/><path d="M37 264.5h23" stroke="#b4b4b4"/><path d="M37 275.5h23" stroke="#b4b4b4"/><path d="M37 286.5h23" stroke="#b4b4b4"/><path d="M37 297.5h23" stroke="#b4b4b4"/><path d="M37 308.5h23" stroke="#b4b4b4"/><path d="M37 319.5h23" stroke="#b4b4b4"/><path d="M37 330.5h23" stroke="#b4b4b4"/><path d="M37 341.5h23" stroke="#b4b4b4"/><path d="M37 352.5h23" stroke="#b4b4b4"/><path d="M37 363.5h23" stroke="#b4b4b4"/><path d="M37 374.5h23" stroke="#b4b4b4"/><path d="M37 385.5h23" stroke="#b4b4b4"/><path d="M37 396.5h23" stroke="#b4b4b4"/><path d="M37 407.5h23" stroke="#b4b4b4"/><path d="M37 418.5h23" stroke="#b4b4b4"/><path d="M37 429.5h23" stroke="#b4b4b4"/><path d="M37 440.5h23" stroke="#b4b4b4"/><path d="M37 451.5h23" stroke="#b4b4b4"/><path d="M37 462.5h23" stroke="#b4b4b4"/><path d="M37 473.5h23" stroke="#b4b4b4"/><path d="M37 484.5h23" stroke="#b4b4b4"/><path d="M37 495.5h23" stroke="#b4b4b4"/><path d="M37 506.5h23" stroke="#b4b4b4"/><path d="M37 517.5h23" stroke="#b4b4b4"/><path d="M37 528.5h23" stroke="#b4b4b4"/><path d="M37 539.5h23" stroke="#b4b4b4"/><path d="M37 550.5h23" stroke="#b4b4b4"/><path d="M37 561.5h23" stroke="#b4b4b4"/><path d="M60.5 253v309" stroke="#9a9a9a"/><path d="M170 264.5H1066" stroke="#d4d4d4"/><path d="M170 275.5H1066" stroke="#d4d4d4"/><path d="M170 286.5H1066" stroke="#d4d4d4"/><path d="M170 297.5H1066" stroke="#d4d4d4"/><path d="M170 308.5H1066" stroke="#d4d4d4"/><path d="M170 319.5H1066" stroke="#d4d4d4"/><path d="M170 330.5H1066" stroke="#d4d4d4"/><path d="M170 341.5H1066" stroke="#d4d4d4"/><path d="M170 352.5H1066" stroke="#d4d4d4"/><path d="M170 363.5H1066" stroke="#d4d4d4"/><path d="M170 374.5H1066" stroke="#d4d4d4"/><path d="M170 385.5H1066" stroke="#d4d4d4"/><path d="M170 396.5H1066" stroke="#d4d4d4"/><path d="M170 407.5H1066" stroke="#d4d4d4"/><path d="M170 418.5H1066" stroke="#d4d4d4"/><path d="M170 429.5H1066" stroke="#d4d4d4"/><path d="M170 440.5H1066" stroke="#d4d4d4"/><path d="M170 451.5H1066" stroke="#d4d4d4"/><path d="M170 462.5H1066" stroke="#d4d4d4"/><path d="M170 473.5H1066" stroke="#d4d4d4"/><path d="M170 484.5H1066" stroke="#d4d4d4"/><path d="M170 495.5H1066" stroke="#d4d4d4"/><path d="M170 506.5H1066" stroke="#d4d4d4"/><path d="M170 517.5H1066" stroke="#d4d4d4"/><path d="M170 528.5H1066" stroke="#d4d4d4"/><path d="M170 539.5H1066" stroke="#d4d4d4"/><path d="M170 550.5H1066" stroke="#d4d4d4"/><path d="M170 561.5H1066" stroke="#d4d4d4"/><path d="M170.5 254v308" stroke="#d4d4d4"/><path d="M217.5 254v308" stroke="#d4d4d4"/><path d="M264.5 254v308" stroke="#d4d4d4"/><path d="M311.5 254v308" stroke="#d4d4d4"/><path d="M358.5 254v308" stroke="#d4d4d4"/><path d="M405.5 254v308" stroke="#d4d4d4"/><path d="M452.5 254v308" stroke="#d4d4d4"/><path d="M499.5 254v308" stroke="#d4d4d4"/><path d="M546.5 254v308" stroke="#d4d4d4"/><path d="M593.5 254v308" stroke="#d4d4d4"/><path d="M640.5 254v308" stroke="#d4d4d4"/><path d="M687.5 254v308" stroke="#d4d4d4"/><path d="M734.5 254v308" stroke="#d4d4d4"/><path d="M781.5 254v308" stroke="#d4d4d4"/><path d="M828.5 254v308" stroke="#d4d4d4"/><path d="M875.5 254v308" stroke="#d4d4d4"/><path d="M922.5 254v308" stroke="#d4d4d4"/><path d="M969.5 254v308" stroke="#d4d4d4"/><path d="M1016.5 254v308" stroke="#d4d4d4"/><path d="M1063.5 254v308" stroke="#d4d4d4"/></svg><svg style="left:0;top:0" width="1066" height="754" shape-rendering="crispEdges"><path fill="rgba(255,255,255,0.3)" d="M45 256h1v1h-1zM45 257h1v1h-1zM45 258h1v1h-1zM45 259h1v1h-1zM45 260h1v1h-1zM45 261h1v1h-1zM45 262h1v1h-1zM46 256h1v1h-1zM46 260h1v1h-1zM46 262h1v1h-1zM47 256h1v1h-1zM47 258h1v1h-1zM47 260h1v1h-1zM47 262h1v1h-1zM48 256h1v1h-1zM48 258h1v1h-1zM48 261h1v1h-1zM48 262h1v1h-1zM49 256h1v1h-1zM49 257h1v1h-1zM49 258h1v1h-1zM49 259h1v1h-1zM49 260h1v1h-1zM49 261h1v1h-1zM49 258h1v1h-1zM49 259h1v1h-1zM49 260h1v1h-1zM49 261h1v1h-1zM50 257h1v1h-1zM50 258h1v1h-1zM50 261h1v1h-1zM51 256h1v1h-1zM51 257h1v1h-1zM51 259h1v1h-1zM51 261h1v1h-1zM51 262h1v1h-1zM52 256h1v1h-1zM52 262h1v1h-1zM53 256h1v1h-1zM53 257h1v1h-1zM53 258h1v1h-1zM53 259h1v1h-1zM53 260h1v1h-1zM53 261h1v1h-1zM53 262h1v1h-1zM45 267h1v1h-1zM45 268h1v1h-1zM45 269h1v1h-1zM45 270h1v1h-1zM45 271h1v1h-1zM45 272h1v1h-1zM45 273h1v1h-1zM46 267h1v1h-1zM46 271h1v1h-1zM46 273h1v1h-1zM47 267h1v1h-1zM47 269h1v1h-1zM47 271h1v1h-1zM47 273h1v1h-1zM48 267h1v1h-1zM48 269h1v1h-1zM48 272h1v1h-1zM48 273h1v1h-1zM49 267h1v1h-1zM49 268h1v1h-1zM49 269h1v1h-1zM49 270h1v1h-1zM49 271h1v1h-1zM49 272h1v1h-1zM49 267h1v1h-1zM49 268h1v1h-1zM49 269h1v1h-1zM49 270h1v1h-1zM49 271h1v1h-1zM49 272h1v1h-1zM49 273h1v1h-1zM50 267h1v1h-1zM50 271h1v1h-1zM50 273h1v1h-1zM51 267h1v1h-1zM51 269h1v1h-1zM51 271h1v1h-1zM51 273h1v1h-1zM52 267h1v1h-1zM52 269h1v1h-1zM52 272h1v1h-1zM52 273h1v1h-1zM53 267h1v1h-1zM53 268h1v1h-1zM53 269h1v1h-1zM53 270h1v1h-1zM53 271h1v1h-1zM53 272h1v1h-1zM45 278h1v1h-1zM45 279h1v1h-1zM45 280h1v1h-1zM45 281h1v1h-1zM45 282h1v1h-1zM45 283h1v1h-1zM45 284h1v1h-1zM46 278h1v1h-1zM46 282h1v1h-1zM46 284h1v1h-1zM47 278h1v1h-1zM47 280h1v1h-1zM47 282h1v1h-1zM47 284h1v1h-1zM48 278h1v1h-1zM48 280h1v1h-1zM48 283h1v1h-1zM48 284h1v1h-1zM49 278h1v1h-1zM49 279h1v1h-1zM49 280h1v1h-1zM49 281h1v1h-1zM49 282h1v1h-1zM49 283h1v1h-1zM49 279h1v1h-1zM49 280h1v1h-1zM49 281h1v1h-1zM49 282h1v1h-1zM49 283h1v1h-1zM50 278h1v1h-1zM50 279h1v1h-1zM50 283h1v1h-1zM50 284h1v1h-1zM51 278h1v1h-1zM51 280h1v1h-1zM51 282h1v1h-1zM51 284h1v1h-1zM52 278h1v1h-1zM52 279h1v1h-1zM52 280h1v1h-1zM52 281h1v1h-1zM52 283h1v1h-1zM52 284h1v1h-1zM53 281h1v1h-1zM53 282h1v1h-1zM53 283h1v1h-1zM45 289h1v1h-1zM45 290h1v1h-1zM45 291h1v1h-1zM45 292h1v1h-1zM45 293h1v1h-1zM45 294h1v1h-1zM45 295h1v1h-1zM46 289h1v1h-1zM46 293h1v1h-1zM46 295h1v1h-1zM47 289h1v1h-1zM47 291h1v1h-1zM47 293h1v1h-1zM47 295h1v1h-1zM48 289h1v1h-1zM48 291h1v1h-1zM48 294h1v1h-1zM48 295h1v1h-1zM49 289h1v1h-1zM49 290h1v1h-1zM49 291h1v1h-1zM49 292h1v1h-1zM49 293h1v1h-1zM49 294h1v1h-1zM49 289h1v1h-1zM49 290h1v1h-1zM49 291h1v1h-1zM50 289h1v1h-1zM50 291h1v1h-1zM50 292h1v1h-1zM50 293h1v1h-1zM50 294h1v1h-1zM50 295h1v1h-1zM51 289h1v1h-1zM51 291h1v1h-1zM51 295h1v1h-1zM52 289h1v1h-1zM52 292h1v1h-1zM52 293h1v1h-1zM52 294h1v1h-1zM52 295h1v1h-1zM53 289h1v1h-1zM53 290h1v1h-1zM53 291h1v1h-1zM53 292h1v1h-1zM45 300h1v1h-1zM45 301h1v1h-1zM45 302h1v1h-1zM45 303h1v1h-1zM45 304h1v1h-1zM45 305h1v1h-1zM45 306h1v1h-1zM46 300h1v1h-1zM46 304h1v1h-1zM46 306h1v1h-1zM47 300h1v1h-1zM47 302h1v1h-1zM47 304h1v1h-1zM47 306h1v1h-1zM48 300h1v1h-1zM48 302h1v1h-1zM48 305h1v1h-1zM48 306h1v1h-1zM49 300h1v1h-1zM49 301h1v1h-1zM49 302h1v1h-1zM49 303h1v1h-1zM49 304h1v1h-1zM49 305h1v1h-1zM49 301h1v1h-1zM49 302h1v1h-1zM49 303h1v1h-1zM49 304h1v1h-1zM49 305h1v1h-1zM50 300h1v1h-1zM50 301h1v1h-1zM50 303h1v1h-1zM50 305h1v1h-1zM50 306h1v1h-1zM51 300h1v1h-1zM51 302h1v1h-1zM51 304h1v1h-1zM51 306h1v1h-1zM52 300h1v1h-1zM52 301h1v1h-1zM52 303h1v1h-1zM52 305h1v1h-1zM52 306h1v1h-1zM53 301h1v1h-1zM53 302h1v1h-1zM53 303h1v1h-1zM53 304h1v1h-1zM53 305h1v1h-1zM45 311h1v1h-1zM45 312h1v1h-1zM45 313h1v1h-1zM45 314h1v1h-1zM45 315h1v1h-1zM45 316h1v1h-1zM45 317h1v1h-1zM46 311h1v1h-1zM46 315h1v1h-1zM46 317h1v1h-1zM47 311h1v1h-1zM47 313h1v1h-1zM47 315h1v1h-1zM47 317h1v1h-1zM48 311h1v1h-1zM48 313h1v1h-1zM48 316h1v1h-1zM48 317h1v1h-1zM49 311h1v1h-1zM49 312h1v1h-1zM49 313h1v1h-1zM49 314h1v1h-1zM49 315h1v1h-1zM49 316h1v1h-1zM49 312h1v1h-1zM49 313h1v1h-1zM49 314h1v1h-1zM50 311h1v1h-1zM50 312h1v1h-1zM50 314h1v1h-1zM50 315h1v1h-1zM50 316h1v1h-1zM50 317h1v1h-1zM51 311h1v1h-1zM51 313h1v1h-1zM51 315h1v1h-1zM51 317h1v1h-1zM52 311h1v1h-1zM52 312h1v1h-1zM52 316h1v1h-1zM52 317h1v1h-1zM53 312h1v1h-1zM53 313h1v1h-1zM53 314h1v1h-1zM53 315h1v1h-1zM53 316h1v1h-1zM45 323h1v1h-1zM45 324h1v1h-1zM45 325h1v1h-1zM45 326h1v1h-1zM45 327h1v1h-1zM46 322h1v1h-1zM46 323h1v1h-1zM46 327h1v1h-1zM46 328h1v1h-1zM47 322h1v1h-1zM47 324h1v1h-1zM47 326h1v1h-1zM47 328h1v1h-1zM48 322h1v1h-1zM48 323h1v1h-1zM48 324h1v1h-1zM48 325h1v1h-1zM48 327h1v1h-1zM48 328h1v1h-1zM49 325h1v1h-1zM49 326h1v1h-1zM49 327h1v1h-1zM49 323h1v1h-1zM49 324h1v1h-1zM49 325h1v1h-1zM49 326h1v1h-1zM49 327h1v1h-1zM50 322h1v1h-1zM50 323h1v1h-1zM50 327h1v1h-1zM50 328h1v1h-1zM51 322h1v1h-1zM51 324h1v1h-1zM51 325h1v1h-1zM51 326h1v1h-1zM51 328h1v1h-1zM52 322h1v1h-1zM52 323h1v1h-1zM52 327h1v1h-1zM52 328h1v1h-1zM53 323h1v1h-1zM53 324h1v1h-1zM53 325h1v1h-1zM53 326h1v1h-1zM53 327h1v1h-1zM45 334h1v1h-1zM45 335h1v1h-1zM45 336h1v1h-1zM45 337h1v1h-1zM45 338h1v1h-1zM46 333h1v1h-1zM46 334h1v1h-1zM46 338h1v1h-1zM46 339h1v1h-1zM47 333h1v1h-1zM47 335h1v1h-1zM47 337h1v1h-1zM47 339h1v1h-1zM48 333h1v1h-1zM48 334h1v1h-1zM48 335h1v1h-1zM48 336h1v1h-1zM48 338h1v1h-1zM48 339h1v1h-1zM49 336h1v1h-1zM49 337h1v1h-1zM49 338h1v1h-1zM49 334h1v1h-1zM49 335h1v1h-1zM49 336h1v1h-1zM50 333h1v1h-1zM50 334h1v1h-1zM50 336h1v1h-1zM50 337h1v1h-1zM50 338h1v1h-1zM50 339h1v1h-1zM51 333h1v1h-1zM51 339h1v1h-1zM52 333h1v1h-1zM52 334h1v1h-1zM52 335h1v1h-1zM52 336h1v1h-1zM52 337h1v1h-1zM52 338h1v1h-1zM52 339h1v1h-1zM45 345h1v1h-1zM45 346h1v1h-1zM45 347h1v1h-1zM45 348h1v1h-1zM45 349h1v1h-1zM46 344h1v1h-1zM46 345h1v1h-1zM46 349h1v1h-1zM46 350h1v1h-1zM47 344h1v1h-1zM47 346h1v1h-1zM47 348h1v1h-1zM47 350h1v1h-1zM48 344h1v1h-1zM48 345h1v1h-1zM48 346h1v1h-1zM48 347h1v1h-1zM48 349h1v1h-1zM48 350h1v1h-1zM49 347h1v1h-1zM49 348h1v1h-1zM49 349h1v1h-1zM49 344h1v1h-1zM49 345h1v1h-1zM49 346h1v1h-1zM49 347h1v1h-1zM49 348h1v1h-1zM49 349h1v1h-1zM49 350h1v1h-1zM50 344h1v1h-1zM50 346h1v1h-1zM50 347h1v1h-1zM50 350h1v1h-1zM51 344h1v1h-1zM51 346h1v1h-1zM51 348h1v1h-1zM51 350h1v1h-1zM52 344h1v1h-1zM52 345h1v1h-1zM52 347h1v1h-1zM52 348h1v1h-1zM52 350h1v1h-1zM53 345h1v1h-1zM53 346h1v1h-1zM53 347h1v1h-1zM53 348h1v1h-1zM53 349h1v1h-1zM53 350h1v1h-1zM45 356h1v1h-1zM45 357h1v1h-1zM45 358h1v1h-1zM45 359h1v1h-1zM45 360h1v1h-1zM46 355h1v1h-1zM46 356h1v1h-1zM46 360h1v1h-1zM46 361h1v1h-1zM47 355h1v1h-1zM47 357h1v1h-1zM47 359h1v1h-1zM47 361h1v1h-1zM48 355h1v1h-1zM48 356h1v1h-1zM48 357h1v1h-1zM48 358h1v1h-1zM48 360h1v1h-1zM48 361h1v1h-1zM49 358h1v1h-1zM49 359h1v1h-1zM49 360h1v1h-1zM49 355h1v1h-1zM49 356h1v1h-1zM49 357h1v1h-1zM49 359h1v1h-1zM49 360h1v1h-1zM49 361h1v1h-1zM50 355h1v1h-1zM50 357h1v1h-1zM50 358h1v1h-1zM50 359h1v1h-1zM50 361h1v1h-1zM51 355h1v1h-1zM51 357h1v1h-1zM51 359h1v1h-1zM51 361h1v1h-1zM52 355h1v1h-1zM52 356h1v1h-1zM52 358h1v1h-1zM52 360h1v1h-1zM52 361h1v1h-1zM53 356h1v1h-1zM53 357h1v1h-1zM53 358h1v1h-1zM53 359h1v1h-1zM53 360h1v1h-1zM45 367h1v1h-1zM45 368h1v1h-1zM45 369h1v1h-1zM45 370h1v1h-1zM45 371h1v1h-1zM46 366h1v1h-1zM46 367h1v1h-1zM46 371h1v1h-1zM46 372h1v1h-1zM47 366h1v1h-1zM47 368h1v1h-1zM47 370h1v1h-1zM47 372h1v1h-1zM48 366h1v1h-1zM48 367h1v1h-1zM48 368h1v1h-1zM48 369h1v1h-1zM48 371h1v1h-1zM48 372h1v1h-1zM49 369h1v1h-1zM49 370h1v1h-1zM49 371h1v1h-1zM49 368h1v1h-1zM49 369h1v1h-1zM49 370h1v1h-1zM49 371h1v1h-1zM50 367h1v1h-1zM50 368h1v1h-1zM50 371h1v1h-1zM51 366h1v1h-1zM51 367h1v1h-1zM51 369h1v1h-1zM51 371h1v1h-1zM51 372h1v1h-1zM52 366h1v1h-1zM52 372h1v1h-1zM53 366h1v1h-1zM53 367h1v1h-1zM53 368h1v1h-1zM53 369h1v1h-1zM53 370h1v1h-1zM53 371h1v1h-1zM53 372h1v1h-1zM45 378h1v1h-1zM45 379h1v1h-1zM45 380h1v1h-1zM45 381h1v1h-1zM45 382h1v1h-1zM46 377h1v1h-1zM46 378h1v1h-1zM46 382h1v1h-1zM46 383h1v1h-1zM47 377h1v1h-1zM47 379h1v1h-1zM47 381h1v1h-1zM47 383h1v1h-1zM48 377h1v1h-1zM48 378h1v1h-1zM48 379h1v1h-1zM48 380h1v1h-1zM48 382h1v1h-1zM48 383h1v1h-1zM49 380h1v1h-1zM49 381h1v1h-1zM49 382h1v1h-1zM49 377h1v1h-1zM49 378h1v1h-1zM49 379h1v1h-1zM49 380h1v1h-1zM49 381h1v1h-1zM49 382h1v1h-1zM49 383h1v1h-1zM50 377h1v1h-1zM50 381h1v1h-1zM50 383h1v1h-1zM51 377h1v1h-1zM51 379h1v1h-1zM51 381h1v1h-1zM51 383h1v1h-1zM52 377h1v1h-1zM52 379h1v1h-1zM52 382h1v1h-1zM52 383h1v1h-1zM53 377h1v1h-1zM53 378h1v1h-1zM53 379h1v1h-1zM53 380h1v1h-1zM53 381h1v1h-1zM53 382h1v1h-1zM45 389h1v1h-1zM45 390h1v1h-1zM45 391h1v1h-1zM45 392h1v1h-1zM45 393h1v1h-1zM46 388h1v1h-1zM46 389h1v1h-1zM46 393h1v1h-1zM46 394h1v1h-1zM47 388h1v1h-1zM47 390h1v1h-1zM47 392h1v1h-1zM47 394h1v1h-1zM48 388h1v1h-1zM48 389h1v1h-1zM48 390h1v1h-1zM48 391h1v1h-1zM48 393h1v1h-1zM48 394h1v1h-1zM49 391h1v1h-1zM49 392h1v1h-1zM49 393h1v1h-1zM49 389h1v1h-1zM49 390h1v1h-1zM49 391h1v1h-1zM49 392h1v1h-1zM49 393h1v1h-1zM50 388h1v1h-1zM50 389h1v1h-1zM50 393h1v1h-1zM50 394h1v1h-1zM51 388h1v1h-1zM51 390h1v1h-1zM51 392h1v1h-1zM51 394h1v1h-1zM52 388h1v1h-1zM52 389h1v1h-1zM52 390h1v1h-1zM52 391h1v1h-1zM52 393h1v1h-1zM52 394h1v1h-1zM53 391h1v1h-1zM53 392h1v1h-1zM53 393h1v1h-1zM45 400h1v1h-1zM45 401h1v1h-1zM45 402h1v1h-1zM45 403h1v1h-1zM45 404h1v1h-1zM46 399h1v1h-1zM46 400h1v1h-1zM46 404h1v1h-1zM46 405h1v1h-1zM47 399h1v1h-1zM47 401h1v1h-1zM47 403h1v1h-1zM47 405h1v1h-1zM48 399h1v1h-1zM48 400h1v1h-1zM48 401h1v1h-1zM48 402h1v1h-1zM48 404h1v1h-1zM48 405h1v1h-1zM49 402h1v1h-1zM49 403h1v1h-1zM49 404h1v1h-1zM49 399h1v1h-1zM49 400h1v1h-1zM49 401h1v1h-1zM50 399h1v1h-1zM50 401h1v1h-1zM50 402h1v1h-1zM50 403h1v1h-1zM50 404h1v1h-1zM50 405h1v1h-1zM51 399h1v1h-1zM51 401h1v1h-1zM51 405h1v1h-1zM52 399h1v1h-1zM52 402h1v1h-1zM52 403h1v1h-1zM52 404h1v1h-1zM52 405h1v1h-1zM53 399h1v1h-1zM53 400h1v1h-1zM53 401h1v1h-1zM53 402h1v1h-1zM45 411h1v1h-1zM45 412h1v1h-1zM45 413h1v1h-1zM45 414h1v1h-1zM45 415h1v1h-1zM46 410h1v1h-1zM46 411h1v1h-1zM46 415h1v1h-1zM46 416h1v1h-1zM47 410h1v1h-1zM47 412h1v1h-1zM47 414h1v1h-1zM47 416h1v1h-1zM48 410h1v1h-1zM48 411h1v1h-1zM48 412h1v1h-1zM48 413h1v1h-1zM48 415h1v1h-1zM48 416h1v1h-1zM49 413h1v1h-1zM49 414h1v1h-1zM49 415h1v1h-1zM49 411h1v1h-1zM49 412h1v1h-1zM49 413h1v1h-1zM49 414h1v1h-1zM49 415h1v1h-1zM50 410h1v1h-1zM50 411h1v1h-1zM50 413h1v1h-1zM50 415h1v1h-1zM50 416h1v1h-1zM51 410h1v1h-1zM51 412h1v1h-1zM51 414h1v1h-1zM51 416h1v1h-1zM52 410h1v1h-1zM52 411h1v1h-1zM52 413h1v1h-1zM52 415h1v1h-1zM52 416h1v1h-1zM53 411h1v1h-1zM53 412h1v1h-1zM53 413h1v1h-1zM53 414h1v1h-1zM53 415h1v1h-1zM45 422h1v1h-1zM45 423h1v1h-1zM45 424h1v1h-1zM45 425h1v1h-1zM45 426h1v1h-1zM46 421h1v1h-1zM46 422h1v1h-1zM46 426h1v1h-1zM46 427h1v1h-1zM47 421h1v1h-1zM47 423h1v1h-1zM47 425h1v1h-1zM47 427h1v1h-1zM48 421h1v1h-1zM48 422h1v1h-1zM48 423h1v1h-1zM48 424h1v1h-1zM48 426h1v1h-1zM48 427h1v1h-1zM49 424h1v1h-1zM49 425h1v1h-1zM49 426h1v1h-1zM49 422h1v1h-1zM49 423h1v1h-1zM49 424h1v1h-1zM50 421h1v1h-1zM50 422h1v1h-1zM50 424h1v1h-1zM50 425h1v1h-1zM50 426h1v1h-1zM50 427h1v1h-1zM51 421h1v1h-1zM51 423h1v1h-1zM51 425h1v1h-1zM51 427h1v1h-1zM52 421h1v1h-1zM52 422h1v1h-1zM52 426h1v1h-1zM52 427h1v1h-1zM53 422h1v1h-1zM53 423h1v1h-1zM53 424h1v1h-1zM53 425h1v1h-1zM53 426h1v1h-1zM45 432h1v1h-1zM45 433h1v1h-1zM45 434h1v1h-1zM46 432h1v1h-1zM46 434h1v1h-1zM46 435h1v1h-1zM46 436h1v1h-1zM46 437h1v1h-1zM46 438h1v1h-1zM47 432h1v1h-1zM47 434h1v1h-1zM47 438h1v1h-1zM48 432h1v1h-1zM48 435h1v1h-1zM48 436h1v1h-1zM48 437h1v1h-1zM48 438h1v1h-1zM49 432h1v1h-1zM49 433h1v1h-1zM49 434h1v1h-1zM49 435h1v1h-1zM49 433h1v1h-1zM49 434h1v1h-1zM49 435h1v1h-1zM49 436h1v1h-1zM49 437h1v1h-1zM50 432h1v1h-1zM50 433h1v1h-1zM50 437h1v1h-1zM50 438h1v1h-1zM51 432h1v1h-1zM51 434h1v1h-1zM51 435h1v1h-1zM51 436h1v1h-1zM51 438h1v1h-1zM52 432h1v1h-1zM52 433h1v1h-1zM52 437h1v1h-1zM52 438h1v1h-1zM53 433h1v1h-1zM53 434h1v1h-1zM53 435h1v1h-1zM53 436h1v1h-1zM53 437h1v1h-1zM45 443h1v1h-1zM45 444h1v1h-1zM45 445h1v1h-1zM46 443h1v1h-1zM46 445h1v1h-1zM46 446h1v1h-1zM46 447h1v1h-1zM46 448h1v1h-1zM46 449h1v1h-1zM47 443h1v1h-1zM47 445h1v1h-1zM47 449h1v1h-1zM48 443h1v1h-1zM48 446h1v1h-1zM48 447h1v1h-1zM48 448h1v1h-1zM48 449h1v1h-1zM49 443h1v1h-1zM49 444h1v1h-1zM49 445h1v1h-1zM49 446h1v1h-1zM49 444h1v1h-1zM49 445h1v1h-1zM49 446h1v1h-1zM50 443h1v1h-1zM50 444h1v1h-1zM50 446h1v1h-1zM50 447h1v1h-1zM50 448h1v1h-1zM50 449h1v1h-1zM51 443h1v1h-1zM51 449h1v1h-1zM52 443h1v1h-1zM52 444h1v1h-1zM52 445h1v1h-1zM52 446h1v1h-1zM52 447h1v1h-1zM52 448h1v1h-1zM52 449h1v1h-1zM45 454h1v1h-1zM45 455h1v1h-1zM45 456h1v1h-1zM46 454h1v1h-1zM46 456h1v1h-1zM46 457h1v1h-1zM46 458h1v1h-1zM46 459h1v1h-1zM46 460h1v1h-1zM47 454h1v1h-1zM47 456h1v1h-1zM47 460h1v1h-1zM48 454h1v1h-1zM48 457h1v1h-1zM48 458h1v1h-1zM48 459h1v1h-1zM48 460h1v1h-1zM49 454h1v1h-1zM49 455h1v1h-1zM49 456h1v1h-1zM49 457h1v1h-1zM49 454h1v1h-1zM49 455h1v1h-1zM49 456h1v1h-1zM49 457h1v1h-1zM49 458h1v1h-1zM49 459h1v1h-1zM49 460h1v1h-1zM50 454h1v1h-1zM50 456h1v1h-1zM50 457h1v1h-1zM50 460h1v1h-1zM51 454h1v1h-1zM51 456h1v1h-1zM51 458h1v1h-1zM51 460h1v1h-1zM52 454h1v1h-1zM52 455h1v1h-1zM52 457h1v1h-1zM52 458h1v1h-1zM52 460h1v1h-1zM53 455h1v1h-1zM53 456h1v1h-1zM53 457h1v1h-1zM53 458h1v1h-1zM53 459h1v1h-1zM53 460h1v1h-1zM45 465h1v1h-1zM45 466h1v1h-1zM45 467h1v1h-1zM46 465h1v1h-1zM46 467h1v1h-1zM46 468h1v1h-1zM46 469h1v1h-1zM46 470h1v1h-1zM46 471h1v1h-1zM47 465h1v1h-1zM47 467h1v1h-1zM47 471h1v1h-1zM48 465h1v1h-1zM48 468h1v1h-1zM48 469h1v1h-1zM48 470h1v1h-1zM48 471h1v1h-1zM49 465h1v1h-1zM49 466h1v1h-1zM49 467h1v1h-1zM49 468h1v1h-1zM49 465h1v1h-1zM49 466h1v1h-1zM49 467h1v1h-1zM49 469h1v1h-1zM49 470h1v1h-1zM49 471h1v1h-1zM50 465h1v1h-1zM50 467h1v1h-1zM50 468h1v1h-1zM50 469h1v1h-1zM50 471h1v1h-1zM51 465h1v1h-1zM51 467h1v1h-1zM51 469h1v1h-1zM51 471h1v1h-1zM52 465h1v1h-1zM52 466h1v1h-1zM52 468h1v1h-1zM52 470h1v1h-1zM52 471h1v1h-1zM53 466h1v1h-1zM53 467h1v1h-1zM53 468h1v1h-1zM53 469h1v1h-1zM53 470h1v1h-1zM45 476h1v1h-1zM45 477h1v1h-1zM45 478h1v1h-1zM46 476h1v1h-1zM46 478h1v1h-1zM46 479h1v1h-1zM46 480h1v1h-1zM46 481h1v1h-1zM46 482h1v1h-1zM47 476h1v1h-1zM47 478h1v1h-1zM47 482h1v1h-1zM48 476h1v1h-1zM48 479h1v1h-1zM48 480h1v1h-1zM48 481h1v1h-1zM48 482h1v1h-1zM49 476h1v1h-1zM49 477h1v1h-1zM49 478h1v1h-1zM49 479h1v1h-1zM49 478h1v1h-1zM49 479h1v1h-1zM49 480h1v1h-1zM49 481h1v1h-1zM50 477h1v1h-1zM50 478h1v1h-1zM50 481h1v1h-1zM51 476h1v1h-1zM51 477h1v1h-1zM51 479h1v1h-1zM51 481h1v1h-1zM51 482h1v1h-1zM52 476h1v1h-1zM52 482h1v1h-1zM53 476h1v1h-1zM53 477h1v1h-1zM53 478h1v1h-1zM53 479h1v1h-1zM53 480h1v1h-1zM53 481h1v1h-1zM53 482h1v1h-1zM45 487h1v1h-1zM45 488h1v1h-1zM45 489h1v1h-1zM46 487h1v1h-1zM46 489h1v1h-1zM46 490h1v1h-1zM46 491h1v1h-1zM46 492h1v1h-1zM46 493h1v1h-1zM47 487h1v1h-1zM47 489h1v1h-1zM47 493h1v1h-1zM48 487h1v1h-1zM48 490h1v1h-1zM48 491h1v1h-1zM48 492h1v1h-1zM48 493h1v1h-1zM49 487h1v1h-1zM49 488h1v1h-1zM49 489h1v1h-1zM49 490h1v1h-1zM49 487h1v1h-1zM49 488h1v1h-1zM49 489h1v1h-1zM49 490h1v1h-1zM49 491h1v1h-1zM49 492h1v1h-1zM49 493h1v1h-1zM50 487h1v1h-1zM50 491h1v1h-1zM50 493h1v1h-1zM51 487h1v1h-1zM51 489h1v1h-1zM51 491h1v1h-1zM51 493h1v1h-1zM52 487h1v1h-1zM52 489h1v1h-1zM52 492h1v1h-1zM52 493h1v1h-1zM53 487h1v1h-1zM53 488h1v1h-1zM53 489h1v1h-1zM53 490h1v1h-1zM53 491h1v1h-1zM53 492h1v1h-1zM45 498h1v1h-1zM45 499h1v1h-1zM45 500h1v1h-1zM46 498h1v1h-1zM46 500h1v1h-1zM46 501h1v1h-1zM46 502h1v1h-1zM46 503h1v1h-1zM46 504h1v1h-1zM47 498h1v1h-1zM47 500h1v1h-1zM47 504h1v1h-1zM48 498h1v1h-1zM48 501h1v1h-1zM48 502h1v1h-1zM48 503h1v1h-1zM48 504h1v1h-1zM49 498h1v1h-1zM49 499h1v1h-1zM49 500h1v1h-1zM49 501h1v1h-1zM49 499h1v1h-1zM49 500h1v1h-1zM49 501h1v1h-1zM49 502h1v1h-1zM49 503h1v1h-1zM50 498h1v1h-1zM50 499h1v1h-1zM50 503h1v1h-1zM50 504h1v1h-1zM51 498h1v1h-1zM51 500h1v1h-1zM51 502h1v1h-1zM51 504h1v1h-1zM52 498h1v1h-1zM52 499h1v1h-1zM52 500h1v1h-1zM52 501h1v1h-1zM52 503h1v1h-1zM52 504h1v1h-1zM53 501h1v1h-1zM53 502h1v1h-1zM53 503h1v1h-1zM45 509h1v1h-1zM45 510h1v1h-1zM45 511h1v1h-1zM46 509h1v1h-1zM46 511h1v1h-1zM46 512h1v1h-1zM46 513h1v1h-1zM46 514h1v1h-1zM46 515h1v1h-1zM47 509h1v1h-1zM47 511h1v1h-1zM47 515h1v1h-1zM48 509h1v1h-1zM48 512h1v1h-1zM48 513h1v1h-1zM48 514h1v1h-1zM48 515h1v1h-1zM49 509h1v1h-1zM49 510h1v1h-1zM49 511h1v1h-1zM49 512h1v1h-1zM49 509h1v1h-1zM49 510h1v1h-1zM49 511h1v1h-1zM50 509h1v1h-1zM50 511h1v1h-1zM50 512h1v1h-1zM50 513h1v1h-1zM50 514h1v1h-1zM50 515h1v1h-1zM51 509h1v1h-1zM51 511h1v1h-1zM51 515h1v1h-1zM52 509h1v1h-1zM52 512h1v1h-1zM52 513h1v1h-1zM52 514h1v1h-1zM52 515h1v1h-1zM53 509h1v1h-1zM53 510h1v1h-1zM53 511h1v1h-1zM53 512h1v1h-1zM45 520h1v1h-1zM45 521h1v1h-1zM45 522h1v1h-1zM46 520h1v1h-1zM46 522h1v1h-1zM46 523h1v1h-1zM46 524h1v1h-1zM46 525h1v1h-1zM46 526h1v1h-1zM47 520h1v1h-1zM47 522h1v1h-1zM47 526h1v1h-1zM48 520h1v1h-1zM48 523h1v1h-1zM48 524h1v1h-1zM48 525h1v1h-1zM48 526h1v1h-1zM49 520h1v1h-1zM49 521h1v1h-1zM49 522h1v1h-1zM49 523h1v1h-1zM49 521h1v1h-1zM49 522h1v1h-1zM49 523h1v1h-1zM49 524h1v1h-1zM49 525h1v1h-1zM50 520h1v1h-1zM50 521h1v1h-1zM50 523h1v1h-1zM50 525h1v1h-1zM50 526h1v1h-1zM51 520h1v1h-1zM51 522h1v1h-1zM51 524h1v1h-1zM51 526h1v1h-1zM52 520h1v1h-1zM52 521h1v1h-1zM52 523h1v1h-1zM52 525h1v1h-1zM52 526h1v1h-1zM53 521h1v1h-1zM53 522h1v1h-1zM53 523h1v1h-1zM53 524h1v1h-1zM53 525h1v1h-1zM45 531h1v1h-1zM45 532h1v1h-1zM45 533h1v1h-1zM46 531h1v1h-1zM46 533h1v1h-1zM46 534h1v1h-1zM46 535h1v1h-1zM46 536h1v1h-1zM46 537h1v1h-1zM47 531h1v1h-1zM47 533h1v1h-1zM47 537h1v1h-1zM48 531h1v1h-1zM48 534h1v1h-1zM48 535h1v1h-1zM48 536h1v1h-1zM48 537h1v1h-1zM49 531h1v1h-1zM49 532h1v1h-1zM49 533h1v1h-1zM49 534h1v1h-1zM49 532h1v1h-1zM49 533h1v1h-1zM49 534h1v1h-1zM50 531h1v1h-1zM50 532h1v1h-1zM50 534h1v1h-1zM50 535h1v1h-1zM50 536h1v1h-1zM50 537h1v1h-1zM51 531h1v1h-1zM51 533h1v1h-1zM51 535h1v1h-1zM51 537h1v1h-1zM52 531h1v1h-1zM52 532h1v1h-1zM52 536h1v1h-1zM52 537h1v1h-1zM53 532h1v1h-1zM53 533h1v1h-1zM53 534h1v1h-1zM53 535h1v1h-1zM53 536h1v1h-1zM45 543h1v1h-1zM45 544h1v1h-1zM45 545h1v1h-1zM45 546h1v1h-1zM45 547h1v1h-1zM46 542h1v1h-1zM46 543h1v1h-1zM46 545h1v1h-1zM46 547h1v1h-1zM46 548h1v1h-1zM47 542h1v1h-1zM47 544h1v1h-1zM47 546h1v1h-1zM47 548h1v1h-1zM48 542h1v1h-1zM48 543h1v1h-1zM48 545h1v1h-1zM48 547h1v1h-1zM48 548h1v1h-1zM49 543h1v1h-1zM49 544h1v1h-1zM49 545h1v1h-1zM49 546h1v1h-1zM49 547h1v1h-1zM49 543h1v1h-1zM49 544h1v1h-1zM49 545h1v1h-1zM49 546h1v1h-1zM49 547h1v1h-1zM50 542h1v1h-1zM50 543h1v1h-1zM50 547h1v1h-1zM50 548h1v1h-1zM51 542h1v1h-1zM51 544h1v1h-1zM51 545h1v1h-1zM51 546h1v1h-1zM51 548h1v1h-1zM52 542h1v1h-1zM52 543h1v1h-1zM52 547h1v1h-1zM52 548h1v1h-1zM53 543h1v1h-1zM53 544h1v1h-1zM53 545h1v1h-1zM53 546h1v1h-1zM53 547h1v1h-1zM45 554h1v1h-1zM45 555h1v1h-1zM45 556h1v1h-1zM45 557h1v1h-1zM45 558h1v1h-1zM46 553h1v1h-1zM46 554h1v1h-1zM46 556h1v1h-1zM46 558h1v1h-1zM46 559h1v1h-1zM47 553h1v1h-1zM47 555h1v1h-1zM47 557h1v1h-1zM47 559h1v1h-1zM48 553h1v1h-1zM48 554h1v1h-1zM48 556h1v1h-1zM48 558h1v1h-1zM48 559h1v1h-1zM49 554h1v1h-1zM49 555h1v1h-1zM49 556h1v1h-1zM49 557h1v1h-1zM49 558h1v1h-1zM49 554h1v1h-1zM49 555h1v1h-1zM49 556h1v1h-1zM50 553h1v1h-1zM50 554h1v1h-1zM50 556h1v1h-1zM50 557h1v1h-1zM50 558h1v1h-1zM50 559h1v1h-1zM51 553h1v1h-1zM51 559h1v1h-1zM52 553h1v1h-1zM52 554h1v1h-1zM52 555h1v1h-1zM52 556h1v1h-1zM52 557h1v1h-1zM52 558h1v1h-1zM52 559h1v1h-1z"/><path fill="#000" d="M46 257h3v1h-3zM46 258h1v1h-1zM46 259h3v1h-3zM48 260h1v1h-1zM46 261h2v1h-2zM52 257h1v1h-1zM51 258h2v1h-2zM50 259h1v1h-1zM52 259h1v1h-1zM50 260h3v1h-3zM52 261h1v1h-1zM46 268h3v1h-3zM46 269h1v1h-1zM46 270h3v1h-3zM48 271h1v1h-1zM46 272h2v1h-2zM50 268h3v1h-3zM50 269h1v1h-1zM50 270h3v1h-3zM52 271h1v1h-1zM50 272h2v1h-2zM46 279h3v1h-3zM46 280h1v1h-1zM46 281h3v1h-3zM48 282h1v1h-1zM46 283h2v1h-2zM51 279h1v1h-1zM50 280h1v1h-1zM50 281h2v1h-2zM50 282h1v1h-1zM52 282h1v1h-1zM51 283h1v1h-1zM46 290h3v1h-3zM46 291h1v1h-1zM46 292h3v1h-3zM48 293h1v1h-1zM46 294h2v1h-2zM50 290h3v1h-3zM52 291h1v1h-1zM51 292h1v1h-1zM51 293h1v1h-1zM51 294h1v1h-1zM46 301h3v1h-3zM46 302h1v1h-1zM46 303h3v1h-3zM48 304h1v1h-1zM46 305h2v1h-2zM51 301h1v1h-1zM50 302h1v1h-1zM52 302h1v1h-1zM51 303h1v1h-1zM50 304h1v1h-1zM52 304h1v1h-1zM51 305h1v1h-1zM46 312h3v1h-3zM46 313h1v1h-1zM46 314h3v1h-3zM48 315h1v1h-1zM46 316h2v1h-2zM51 312h1v1h-1zM50 313h1v1h-1zM52 313h1v1h-1zM51 314h2v1h-2zM52 315h1v1h-1zM51 316h1v1h-1zM47 323h1v1h-1zM46 324h1v1h-1zM46 325h2v1h-2zM46 326h1v1h-1zM48 326h1v1h-1zM47 327h1v1h-1zM51 323h1v1h-1zM50 324h1v1h-1zM52 324h1v1h-1zM50 325h1v1h-1zM52 325h1v1h-1zM50 326h1v1h-1zM52 326h1v1h-1zM51 327h1v1h-1zM47 334h1v1h-1zM46 335h1v1h-1zM46 336h2v1h-2zM46 337h1v1h-1zM48 337h1v1h-1zM47 338h1v1h-1zM51 334h1v1h-1zM50 335h2v1h-2zM51 336h1v1h-1zM51 337h1v1h-1zM51 338h1v1h-1zM47 345h1v1h-1zM46 346h1v1h-1zM46 347h2v1h-2zM46 348h1v1h-1zM48 348h1v1h-1zM47 349h1v1h-1zM50 345h2v1h-2zM52 346h1v1h-1zM51 347h1v1h-1zM50 348h1v1h-1zM50 349h3v1h-3zM47 356h1v1h-1zM46 357h1v1h-1zM46 358h2v1h-2zM46 359h1v1h-1zM48 359h1v1h-1zM47 360h1v1h-1zM50 356h2v1h-2zM52 357h1v1h-1zM51 358h1v1h-1zM52 359h1v1h-1zM50 360h2v1h-2zM47 367h1v1h-1zM46 368h1v1h-1zM46 369h2v1h-2zM46 370h1v1h-1zM48 370h1v1h-1zM47 371h1v1h-1zM52 367h1v1h-1zM51 368h2v1h-2zM50 369h1v1h-1zM52 369h1v1h-1zM50 370h3v1h-3zM52 371h1v1h-1zM47 378h1v1h-1zM46 379h1v1h-1zM46 380h2v1h-2zM46 381h1v1h-1zM48 381h1v1h-1zM47 382h1v1h-1zM50 378h3v1h-3zM50 379h1v1h-1zM50 380h3v1h-3zM52 381h1v1h-1zM50 382h2v1h-2zM47 389h1v1h-1zM46 390h1v1h-1zM46 391h2v1h-2zM46 392h1v1h-1zM48 392h1v1h-1zM47 393h1v1h-1zM51 389h1v1h-1zM50 390h1v1h-1zM50 391h2v1h-2zM50 392h1v1h-1zM52 392h1v1h-1zM51 393h1v1h-1zM47 400h1v1h-1zM46 401h1v1h-1zM46 402h2v1h-2zM46 403h1v1h-1zM48 403h1v1h-1zM47 404h1v1h-1zM50 400h3v1h-3zM52 401h1v1h-1zM51 402h1v1h-1zM51 403h1v1h-1zM51 404h1v1h-1zM47 411h1v1h-1zM46 412h1v1h-1zM46 413h2v1h-2zM46 414h1v1h-1zM48 414h1v1h-1zM47 415h1v1h-1zM51 411h1v1h-1zM50 412h1v1h-1zM52 412h1v1h-1zM51 413h1v1h-1zM50 414h1v1h-1zM52 414h1v1h-1zM51 415h1v1h-1zM47 422h1v1h-1zM46 423h1v1h-1zM46 424h2v1h-2zM46 425h1v1h-1zM48 425h1v1h-1zM47 426h1v1h-1zM51 422h1v1h-1zM50 423h1v1h-1zM52 423h1v1h-1zM51 424h2v1h-2zM52 425h1v1h-1zM51 426h1v1h-1zM46 433h3v1h-3zM48 434h1v1h-1zM47 435h1v1h-1zM47 436h1v1h-1zM47 437h1v1h-1zM51 433h1v1h-1zM50 434h1v1h-1zM52 434h1v1h-1zM50 435h1v1h-1zM52 435h1v1h-1zM50 436h1v1h-1zM52 436h1v1h-1zM51 437h1v1h-1zM46 444h3v1h-3zM48 445h1v1h-1zM47 446h1v1h-1zM47 447h1v1h-1zM47 448h1v1h-1zM51 444h1v1h-1zM50 445h2v1h-2zM51 446h1v1h-1zM51 447h1v1h-1zM51 448h1v1h-1zM46 455h3v1h-3zM48 456h1v1h-1zM47 457h1v1h-1zM47 458h1v1h-1zM47 459h1v1h-1zM50 455h2v1h-2zM52 456h1v1h-1zM51 457h1v1h-1zM50 458h1v1h-1zM50 459h3v1h-3zM46 466h3v1h-3zM48 467h1v1h-1zM47 468h1v1h-1zM47 469h1v1h-1zM47 470h1v1h-1zM50 466h2v1h-2zM52 467h1v1h-1zM51 468h1v1h-1zM52 469h1v1h-1zM50 470h2v1h-2zM46 477h3v1h-3zM48 478h1v1h-1zM47 479h1v1h-1zM47 480h1v1h-1zM47 481h1v1h-1zM52 477h1v1h-1zM51 478h2v1h-2zM50 479h1v1h-1zM52 479h1v1h-1zM50 480h3v1h-3zM52 481h1v1h-1zM46 488h3v1h-3zM48 489h1v1h-1zM47 490h1v1h-1zM47 491h1v1h-1zM47 492h1v1h-1zM50 488h3v1h-3zM50 489h1v1h-1zM50 490h3v1h-3zM52 491h1v1h-1zM50 492h2v1h-2zM46 499h3v1h-3zM48 500h1v1h-1zM47 501h1v1h-1zM47 502h1v1h-1zM47 503h1v1h-1zM51 499h1v1h-1zM50 500h1v1h-1zM50 501h2v1h-2zM50 502h1v1h-1zM52 502h1v1h-1zM51 503h1v1h-1zM46 510h3v1h-3zM48 511h1v1h-1zM47 512h1v1h-1zM47 513h1v1h-1zM47 514h1v1h-1zM50 510h3v1h-3zM52 511h1v1h-1zM51 512h1v1h-1zM51 513h1v1h-1zM51 514h1v1h-1zM46 521h3v1h-3zM48 522h1v1h-1zM47 523h1v1h-1zM47 524h1v1h-1zM47 525h1v1h-1zM51 521h1v1h-1zM50 522h1v1h-1zM52 522h1v1h-1zM51 523h1v1h-1zM50 524h1v1h-1zM52 524h1v1h-1zM51 525h1v1h-1zM46 532h3v1h-3zM48 533h1v1h-1zM47 534h1v1h-1zM47 535h1v1h-1zM47 536h1v1h-1zM51 532h1v1h-1zM50 533h1v1h-1zM52 533h1v1h-1zM51 534h2v1h-2zM52 535h1v1h-1zM51 536h1v1h-1zM47 543h1v1h-1zM46 544h1v1h-1zM48 544h1v1h-1zM47 545h1v1h-1zM46 546h1v1h-1zM48 546h1v1h-1zM47 547h1v1h-1zM51 543h1v1h-1zM50 544h1v1h-1zM52 544h1v1h-1zM50 545h1v1h-1zM52 545h1v1h-1zM50 546h1v1h-1zM52 546h1v1h-1zM51 547h1v1h-1zM47 554h1v1h-1zM46 555h1v1h-1zM48 555h1v1h-1zM47 556h1v1h-1zM46 557h1v1h-1zM48 557h1v1h-1zM47 558h1v1h-1zM51 554h1v1h-1zM50 555h2v1h-2zM51 556h1v1h-1zM51 557h1v1h-1zM51 558h1v1h-1z"/></svg><svg style="left:0;top:0" width="1066" height="754" shape-rendering="crispEdges"><defs><path id="v0" d="M-23 0h1v1h-1zM-22 0h1v1h-1zM-24 1h1v1h-1zM-21 1h1v1h-1zM-23 2h1v1h-1zM-22 2h1v1h-1zM-21 2h1v1h-1zM-21 3h1v1h-1zM-24 4h1v1h-1zM-21 4h1v1h-1zM-23 5h1v1h-1zM-22 5h1v1h-1zM-18 0h1v1h-1zM-17 0h1v1h-1zM-19 1h1v1h-1zM-19 2h1v1h-1zM-18 2h1v1h-1zM-17 2h1v1h-1zM-19 3h1v1h-1zM-16 3h1v1h-1zM-19 4h1v1h-1zM-16 4h1v1h-1zM-18 5h1v1h-1zM-17 5h1v1h-1zM-13 0h1v1h-1zM-12 0h1v1h-1zM-14 1h1v1h-1zM-11 1h1v1h-1zM-14 2h1v1h-1zM-11 2h1v1h-1zM-14 3h1v1h-1zM-11 3h1v1h-1zM-14 4h1v1h-1zM-11 4h1v1h-1zM-13 5h1v1h-1zM-12 5h1v1h-1zM-8 0h1v1h-1zM-7 0h1v1h-1zM-9 1h1v1h-1zM-6 1h1v1h-1zM-9 2h1v1h-1zM-6 2h1v1h-1zM-9 3h1v1h-1zM-6 3h1v1h-1zM-9 4h1v1h-1zM-6 4h1v1h-1zM-8 5h1v1h-1zM-7 5h1v1h-1zM-3 0h1v1h-1zM-2 0h1v1h-1zM-4 1h1v1h-1zM-1 1h1v1h-1zM-4 2h1v1h-1zM-1 2h1v1h-1zM-4 3h1v1h-1zM-1 3h1v1h-1zM-4 4h1v1h-1zM-1 4h1v1h-1zM-3 5h1v1h-1zM-2 5h1v1h-1z"/><path id="v1" d="M-28 0h1v1h-1zM-27 0h1v1h-1zM-29 1h1v1h-1zM-26 1h1v1h-1zM-28 2h1v1h-1zM-27 2h1v1h-1zM-29 3h1v1h-1zM-26 3h1v1h-1zM-29 4h1v1h-1zM-26 4h1v1h-1zM-28 5h1v1h-1zM-27 5h1v1h-1zM-22 0h1v1h-1zM-23 1h1v1h-1zM-22 1h1v1h-1zM-23 2h1v1h-1zM-22 2h1v1h-1zM-24 3h1v1h-1zM-22 3h1v1h-1zM-24 4h1v1h-1zM-23 4h1v1h-1zM-22 4h1v1h-1zM-21 4h1v1h-1zM-22 5h1v1h-1zM-18 0h1v1h-1zM-17 0h1v1h-1zM-19 1h1v1h-1zM-16 1h1v1h-1zM-19 2h1v1h-1zM-16 2h1v1h-1zM-19 3h1v1h-1zM-16 3h1v1h-1zM-19 4h1v1h-1zM-16 4h1v1h-1zM-18 5h1v1h-1zM-17 5h1v1h-1zM-13 0h1v1h-1zM-12 0h1v1h-1zM-14 1h1v1h-1zM-11 1h1v1h-1zM-14 2h1v1h-1zM-11 2h1v1h-1zM-14 3h1v1h-1zM-11 3h1v1h-1zM-14 4h1v1h-1zM-11 4h1v1h-1zM-13 5h1v1h-1zM-12 5h1v1h-1zM-8 0h1v1h-1zM-7 0h1v1h-1zM-9 1h1v1h-1zM-6 1h1v1h-1zM-9 2h1v1h-1zM-6 2h1v1h-1zM-9 3h1v1h-1zM-6 3h1v1h-1zM-9 4h1v1h-1zM-6 4h1v1h-1zM-8 5h1v1h-1zM-7 5h1v1h-1zM-3 0h1v1h-1zM-2 0h1v1h-1zM-4 1h1v1h-1zM-1 1h1v1h-1zM-4 2h1v1h-1zM-1 2h1v1h-1zM-4 3h1v1h-1zM-1 3h1v1h-1zM-4 4h1v1h-1zM-1 4h1v1h-1zM-3 5h1v1h-1zM-2 5h1v1h-1z"/><path id="v2" d="M-26 0h1v1h-1zM-27 1h1v1h-1zM-26 1h1v1h-1zM-26 2h1v1h-1zM-26 3h1v1h-1zM-26 4h1v1h-1zM-26 5h1v1h-1zM-23 0h1v1h-1zM-22 0h1v1h-1zM-24 1h1v1h-1zM-21 1h1v1h-1zM-21 2h1v1h-1zM-23 3h1v1h-1zM-22 3h1v1h-1zM-24 4h1v1h-1zM-24 5h1v1h-1zM-23 5h1v1h-1zM-22 5h1v1h-1zM-21 5h1v1h-1zM-18 0h1v1h-1zM-17 0h1v1h-1zM-19 1h1v1h-1zM-16 1h1v1h-1zM-19 2h1v1h-1zM-16 2h1v1h-1zM-19 3h1v1h-1zM-16 3h1v1h-1zM-19 4h1v1h-1zM-16 4h1v1h-1zM-18 5h1v1h-1zM-17 5h1v1h-1zM-13 0h1v1h-1zM-12 0h1v1h-1zM-14 1h1v1h-1zM-11 1h1v1h-1zM-14 2h1v1h-1zM-11 2h1v1h-1zM-14 3h1v1h-1zM-11 3h1v1h-1zM-14 4h1v1h-1zM-11 4h1v1h-1zM-13 5h1v1h-1zM-12 5h1v1h-1zM-8 0h1v1h-1zM-7 0h1v1h-1zM-9 1h1v1h-1zM-6 1h1v1h-1zM-9 2h1v1h-1zM-6 2h1v1h-1zM-9 3h1v1h-1zM-6 3h1v1h-1zM-9 4h1v1h-1zM-6 4h1v1h-1zM-8 5h1v1h-1zM-7 5h1v1h-1zM-3 0h1v1h-1zM-2 0h1v1h-1zM-4 1h1v1h-1zM-1 1h1v1h-1zM-4 2h1v1h-1zM-1 2h1v1h-1zM-4 3h1v1h-1zM-1 3h1v1h-1zM-4 4h1v1h-1zM-1 4h1v1h-1zM-3 5h1v1h-1zM-2 5h1v1h-1z"/></defs><g fill="#000"><use href="#v0" x="215" y="256"/><use href="#v0" x="262" y="256"/><use href="#v0" x="309" y="256"/><use href="#v0" x="356" y="256"/><use href="#v0" x="403" y="256"/><use href="#v0" x="450" y="256"/><use href="#v0" x="497" y="256"/><use href="#v0" x="544" y="256"/><use href="#v0" x="591" y="256"/><use href="#v0" x="638" y="256"/><use href="#v0" x="685" y="256"/><use href="#v0" x="732" y="256"/><use href="#v1" x="215" y="267"/><use href="#v1" x="262" y="267"/><use href="#v1" x="309" y="267"/><use href="#v1" x="356" y="267"/><use href="#v1" x="403" y="267"/><use href="#v1" x="450" y="267"/><use href="#v1" x="497" y="267"/><use href="#v1" x="544" y="267"/><use href="#v1" x="591" y="267"/><use href="#v1" x="638" y="267"/><use href="#v1" x="685" y="267"/><use href="#v1" x="732" y="267"/><use href="#v2" x="215" y="278"/><use href="#v2" x="262" y="278"/><use href="#v2" x="309" y="278"/><use href="#v2" x="356" y="278"/><use href="#v2" x="403" y="278"/><use href="#v2" x="450" y="278"/><use href="#v2" x="497" y="278"/><use href="#v2" x="544" y="278"/><use href="#v2" x="591" y="278"/><use href="#v2" x="638" y="278"/><use href="#v2" x="685" y="278"/><use href="#v2" x="732" y="278"/><use href="#v0" x="215" y="289"/><use href="#v0" x="262" y="289"/><use href="#v0" x="309" y="289"/><use href="#v0" x="356" y="289"/><use href="#v0" x="403" y="289"/><use href="#v0" x="450" y="289"/><use href="#v0" x="497" y="289"/><use href="#v0" x="544" y="289"/><use href="#v0" x="591" y="289"/><use href="#v0" x="638" y="289"/><use href="#v0" x="685" y="289"/><use href="#v0" x="732" y="289"/><use href="#v1" x="215" y="300"/><use href="#v1" x="262" y="300"/><use href="#v1" x="309" y="300"/><use href="#v1" x="356" y="300"/><use href="#v1" x="403" y="300"/><use href="#v1" x="450" y="300"/><use href="#v1" x="497" y="300"/><use href="#v1" x="544" y="300"/><use href="#v1" x="591" y="300"/><use href="#v1" x="638" y="300"/><use href="#v1" x="685" y="300"/><use href="#v1" x="732" y="300"/><use href="#v2" x="215" y="311"/><use href="#v2" x="262" y="311"/><use href="#v2" x="309" y="311"/><use href="#v2" x="356" y="311"/><use href="#v2" x="403" y="311"/><use href="#v2" x="450" y="311"/><use href="#v2" x="497" y="311"/><use href="#v2" x="544" y="311"/><use href="#v2" x="591" y="311"/><use href="#v2" x="638" y="311"/><use href="#v2" x="685" y="311"/><use href="#v2" x="732" y="311"/><use href="#v0" x="215" y="322"/><use href="#v0" x="262" y="322"/><use href="#v0" x="309" y="322"/><use href="#v0" x="356" y="322"/><use href="#v0" x="403" y="322"/><use href="#v0" x="450" y="322"/><use href="#v0" x="497" y="322"/><use href="#v0" x="544" y="322"/><use href="#v0" x="591" y="322"/><use href="#v0" x="638" y="322"/><use href="#v0" x="685" y="322"/><use href="#v0" x="732" y="322"/><use href="#v1" x="215" y="333"/><use href="#v1" x="262" y="333"/><use href="#v1" x="309" y="333"/><use href="#v1" x="356" y="333"/><use href="#v1" x="403" y="333"/><use href="#v1" x="450" y="333"/><use href="#v1" x="497" y="333"/><use href="#v1" x="544" y="333"/><use href="#v1" x="591" y="333"/><use href="#v1" x="638" y="333"/><use href="#v1" x="685" y="333"/><use href="#v1" x="732" y="333"/><use href="#v2" x="215" y="344"/><use href="#v2" x="262" y="344"/><use href="#v2" x="309" y="344"/><use href="#v2" x="356" y="344"/><use href="#v2" x="403" y="344"/><use href="#v2" x="450" y="344"/><use href="#v2" x="497" y="344"/><use href="#v2" x="544" y="344"/><use href="#v2" x="591" y="344"/><use href="#v2" x="638" y="344"/><use href="#v2" x="685" y="344"/><use href="#v2" x="732" y="344"/><use href="#v0" x="215" y="355"/><use href="#v0" x="262" y="355"/><use href="#v0" x="309" y="355"/><use href="#v0" x="356" y="355"/><use href="#v0" x="403" y="355"/><use href="#v0" x="450" y="355"/><use href="#v0" x="497" y="355"/><use href="#v0" x="544" y="355"/><use href="#v0" x="591" y="355"/><use href="#v0" x="638" y="355"/><use href="#v0" x="685" y="355"/><use href="#v0" x="732" y="355"/><use href="#v1" x="215" y="366"/><use href="#v1" x="262" y="366"/><use href="#v1" x="309" y="366"/><use href="#v1" x="356" y="366"/><use href="#v1" x="403" y="366"/><use href="#v1" x="450" y="366"/><use href="#v1" x="497" y="366"/><use href="#v1" x="544" y="366"/><use href="#v1" x="591" y="366"/><use href="#v1" x="638" y="366"/><use href="#v1" x="685" y="366"/><use href="#v1" x="732" y="366"/><use href="#v2" x="215" y="377"/><use href="#v2" x="262" y="377"/><use href="#v2" x="309" y="377"/><use href="#v2" x="356" y="377"/><use href="#v2" x="403" y="377"/><use href="#v2" x="450" y="377"/><use href="#v2" x="497" y="377"/><use href="#v2" x="544" y="377"/><use href="#v2" x="591" y="377"/><use href="#v2" x="638" y="377"/><use href="#v2" x="685" y="377"/><use href="#v2" x="732" y="377"/><use href="#v0" x="215" y="388"/><use href="#v0" x="262" y="388"/><use href="#v0" x="309" y="388"/><use href="#v0" x="356" y="388"/><use href="#v0" x="403" y="388"/><use href="#v0" x="450" y="388"/><use href="#v0" x="497" y="388"/><use href="#v0" x="544" y="388"/><use href="#v0" x="591" y="388"/><use href="#v0" x="638" y="388"/><use href="#v0" x="685" y="388"/><use href="#v0" x="732" y="388"/><use href="#v1" x="215" y="399"/><use href="#v1" x="262" y="399"/><use href="#v1" x="309" y="399"/><use href="#v1" x="356" y="399"/><use href="#v1" x="403" y="399"/><use href="#v1" x="450" y="399"/><use href="#v1" x="497" y="399"/><use href="#v1" x="544" y="399"/><use href="#v1" x="591" y="399"/><use href="#v1" x="638" y="399"/><use href="#v1" x="685" y="399"/><use href="#v1" x="732" y="399"/><use href="#v2" x="215" y="410"/><use href="#v2" x="262" y="410"/><use href="#v2" x="309" y="410"/><use href="#v2" x="356" y="410"/><use href="#v2" x="403" y="410"/><use href="#v2" x="450" y="410"/><use href="#v2" x="497" y="410"/><use href="#v2" x="544" y="410"/><use href="#v2" x="591" y="410"/><use href="#v2" x="638" y="410"/><use href="#v2" x="685" y="410"/><use href="#v2" x="732" y="410"/><use href="#v0" x="215" y="421"/><use href="#v0" x="262" y="421"/><use href="#v0" x="309" y="421"/><use href="#v0" x="356" y="421"/><use href="#v0" x="403" y="421"/><use href="#v0" x="450" y="421"/><use href="#v0" x="497" y="421"/><use href="#v0" x="544" y="421"/><use href="#v0" x="591" y="421"/><use href="#v0" x="638" y="421"/><use href="#v0" x="685" y="421"/><use href="#v0" x="732" y="421"/><use href="#v1" x="215" y="432"/><use href="#v1" x="262" y="432"/><use href="#v1" x="309" y="432"/><use href="#v1" x="356" y="432"/><use href="#v1" x="403" y="432"/><use href="#v1" x="450" y="432"/><use href="#v1" x="497" y="432"/><use href="#v1" x="544" y="432"/><use href="#v1" x="591" y="432"/><use href="#v1" x="638" y="432"/><use href="#v1" x="685" y="432"/><use href="#v1" x="732" y="432"/><use href="#v2" x="215" y="443"/><use href="#v2" x="262" y="443"/><use href="#v2" x="309" y="443"/><use href="#v2" x="356" y="443"/><use href="#v2" x="403" y="443"/><use href="#v2" x="450" y="443"/><use href="#v2" x="497" y="443"/><use href="#v2" x="544" y="443"/><use href="#v2" x="591" y="443"/><use href="#v2" x="638" y="443"/><use href="#v2" x="685" y="443"/><use href="#v2" x="732" y="443"/><use href="#v0" x="215" y="454"/><use href="#v0" x="262" y="454"/><use href="#v0" x="309" y="454"/><use href="#v0" x="356" y="454"/><use href="#v0" x="403" y="454"/><use href="#v0" x="450" y="454"/><use href="#v0" x="497" y="454"/><use href="#v0" x="544" y="454"/><use href="#v0" x="591" y="454"/><use href="#v0" x="638" y="454"/><use href="#v0" x="685" y="454"/><use href="#v0" x="732" y="454"/><use href="#v1" x="215" y="465"/><use href="#v1" x="262" y="465"/><use href="#v1" x="309" y="465"/><use href="#v1" x="356" y="465"/><use href="#v1" x="403" y="465"/><use href="#v1" x="450" y="465"/><use href="#v1" x="497" y="465"/><use href="#v1" x="544" y="465"/><use href="#v1" x="591" y="465"/><use href="#v1" x="638" y="465"/><use href="#v1" x="685" y="465"/><use href="#v1" x="732" y="465"/><use href="#v2" x="215" y="476"/><use href="#v2" x="262" y="476"/><use href="#v2" x="309" y="476"/><use href="#v2" x="356" y="476"/><use href="#v2" x="403" y="476"/><use href="#v2" x="450" y="476"/><use href="#v2" x="497" y="476"/><use href="#v2" x="544" y="476"/><use href="#v2" x="591" y="476"/><use href="#v2" x="638" y="476"/><use href="#v2" x="685" y="476"/><use href="#v2" x="732" y="476"/><use href="#v0" x="215" y="487"/><use href="#v0" x="262" y="487"/><use href="#v0" x="309" y="487"/><use href="#v0" x="356" y="487"/><use href="#v0" x="403" y="487"/><use href="#v0" x="450" y="487"/><use href="#v0" x="497" y="487"/><use href="#v0" x="544" y="487"/><use href="#v0" x="591" y="487"/><use href="#v0" x="638" y="487"/><use href="#v0" x="685" y="487"/><use href="#v0" x="732" y="487"/><use href="#v1" x="215" y="498"/><use href="#v1" x="262" y="498"/><use href="#v1" x="309" y="498"/><use href="#v1" x="356" y="498"/><use href="#v1" x="403" y="498"/><use href="#v1" x="450" y="498"/><use href="#v1" x="497" y="498"/><use href="#v1" x="544" y="498"/><use href="#v1" x="591" y="498"/><use href="#v1" x="638" y="498"/><use href="#v1" x="685" y="498"/><use href="#v1" x="732" y="498"/><use href="#v2" x="215" y="509"/><use href="#v2" x="262" y="509"/><use href="#v2" x="309" y="509"/><use href="#v2" x="356" y="509"/><use href="#v2" x="403" y="509"/><use href="#v2" x="450" y="509"/><use href="#v2" x="497" y="509"/><use href="#v2" x="544" y="509"/><use href="#v2" x="591" y="509"/><use href="#v2" x="638" y="509"/><use href="#v2" x="685" y="509"/><use href="#v2" x="732" y="509"/><use href="#v0" x="215" y="520"/><use href="#v0" x="262" y="520"/><use href="#v0" x="309" y="520"/><use href="#v0" x="356" y="520"/><use href="#v0" x="403" y="520"/><use href="#v0" x="450" y="520"/><use href="#v0" x="497" y="520"/><use href="#v0" x="544" y="520"/><use href="#v0" x="591" y="520"/><use href="#v0" x="638" y="520"/><use href="#v0" x="685" y="520"/><use href="#v0" x="732" y="520"/><use href="#v1" x="215" y="531"/><use href="#v1" x="262" y="531"/><use href="#v1" x="309" y="531"/><use href="#v1" x="356" y="531"/><use href="#v1" x="403" y="531"/><use href="#v1" x="450" y="531"/><use href="#v1" x="497" y="531"/><use href="#v1" x="544" y="531"/><use href="#v1" x="591" y="531"/><use href="#v1" x="638" y="531"/><use href="#v1" x="685" y="531"/><use href="#v1" x="732" y="531"/><use href="#v2" x="215" y="542"/><use href="#v2" x="262" y="542"/><use href="#v2" x="309" y="542"/><use href="#v2" x="356" y="542"/><use href="#v2" x="403" y="542"/><use href="#v2" x="450" y="542"/><use href="#v2" x="497" y="542"/><use href="#v2" x="544" y="542"/><use href="#v2" x="591" y="542"/><use href="#v2" x="638" y="542"/><use href="#v2" x="685" y="542"/><use href="#v2" x="732" y="542"/><use href="#v0" x="215" y="553"/><use href="#v0" x="262" y="553"/><use href="#v0" x="309" y="553"/><use href="#v0" x="356" y="553"/><use href="#v0" x="403" y="553"/><use href="#v0" x="450" y="553"/><use href="#v0" x="497" y="553"/><use href="#v0" x="544" y="553"/><use href="#v0" x="591" y="553"/><use href="#v0" x="638" y="553"/><use href="#v0" x="685" y="553"/><use href="#v0" x="732" y="553"/></g></svg><svg style="left:0;top:0" width="1066" height="754" shape-rendering="crispEdges"><path fill="#000" d="M753 611h2v1h-2zM752 612h1v1h-1zM755 612h1v1h-1zM753 613h1v1h-1zM754 614h1v1h-1zM752 615h1v1h-1zM755 615h1v1h-1zM753 616h2v1h-2zM758 613h1v1h-1zM757 614h1v1h-1zM759 614h1v1h-1zM757 615h1v1h-1zM758 616h2v1h-2zM761 611h1v1h-1zM761 613h1v1h-1zM761 614h1v1h-1zM761 615h1v1h-1zM761 616h1v1h-1zM763 612h1v1h-1zM763 613h2v1h-2zM763 614h1v1h-1zM763 615h1v1h-1zM764 616h1v1h-1zM767 613h1v1h-1zM766 614h1v1h-1zM768 614h1v1h-1zM766 615h1v1h-1zM767 616h2v1h-2zM773 611h1v1h-1zM772 612h2v1h-2zM773 613h1v1h-1zM773 614h1v1h-1zM773 615h1v1h-1zM773 616h1v1h-1zM777 613h1v1h-1zM779 613h1v1h-1zM777 614h1v1h-1zM779 614h1v1h-1zM778 615h1v1h-1zM778 616h1v1h-1zM782 613h2v1h-2zM781 614h1v1h-1zM784 614h1v1h-1zM781 615h1v1h-1zM784 615h1v1h-1zM782 616h2v1h-2zM786 613h2v1h-2zM786 614h1v1h-1zM788 614h1v1h-1zM786 615h1v1h-1zM788 615h1v1h-1zM786 616h1v1h-1zM788 616h1v1h-1zM793 611h2v1h-2zM792 612h1v1h-1zM795 612h1v1h-1zM794 613h1v1h-1zM795 614h1v1h-1zM792 615h1v1h-1zM795 615h1v1h-1zM793 616h2v1h-2zM763 714h2v1h-2zM762 715h1v1h-1zM765 715h1v1h-1zM763 716h1v1h-1zM764 717h1v1h-1zM762 718h1v1h-1zM765 718h1v1h-1zM763 719h2v1h-2zM768 716h1v1h-1zM767 717h1v1h-1zM769 717h1v1h-1zM767 718h1v1h-1zM768 719h2v1h-2zM771 714h1v1h-1zM771 716h1v1h-1zM771 717h1v1h-1zM771 718h1v1h-1zM771 719h1v1h-1zM773 715h1v1h-1zM773 716h2v1h-2zM773 717h1v1h-1zM773 718h1v1h-1zM774 719h1v1h-1zM777 716h1v1h-1zM776 717h1v1h-1zM778 717h1v1h-1zM776 718h1v1h-1zM777 719h2v1h-2zM783 714h2v1h-2zM782 715h1v1h-1zM785 715h1v1h-1zM785 716h1v1h-1zM783 717h2v1h-2zM782 718h1v1h-1zM782 719h4v1h-4z"/></svg><div class="a" style="left:9px;top:671px;width:19px;height:83px;background:#f0f0f0;"></div><svg style="left:0;top:0" width="1066" height="754"><path d="M8.5 671v83" stroke="#8c8c8c"/><path d="M9 683.5h1" stroke="#8c8c8c"/><path d="M9 696.5h7" stroke="#8c8c8c"/><path d="M9 708.5h1" stroke="#8c8c8c"/><path d="M9 721.5h16" stroke="#8c8c8c"/><path d="M9 733.5h1" stroke="#8c8c8c"/><path d="M9 745.5h7" stroke="#8c8c8c"/><path d="M10 725.5h7" stroke="#6a5a4a" stroke-width="1"/></svg><div class="x" style="top:11.00px;font-size:12px;line-height:12px;color:#fff;letter-spacing:-0.254px;left:660px;">Mappe1 - Excel</div><div class="x" style="top:39.50px;font-size:12px;line-height:12px;color:#fff;letter-spacing:-0.262px;left:14px;">Datei</div><div class="x" style="top:39.50px;font-size:12px;line-height:12px;color:#fff;letter-spacing:-0.652px;left:74px;">Start</div><div class="x" style="top:39.50px;font-size:12px;line-height:12px;color:#fff;letter-spacing:-0.186px;left:128px;">Einfügen</div><div class="x" style="top:39.50px;font-size:12px;line-height:12px;color:#fff;letter-spacing:-0.156px;left:203px;">Seitenlayout</div><div class="x" style="top:39.50px;font-size:12px;line-height:12px;color:#fff;letter-spacing:0.011px;left:297px;">Formeln</div><div class="x" style="top:39.50px;font-size:12px;line-height:12px;color:#fff;letter-spacing:-0.412px;left:370px;">Daten</div><div class="x" style="top:39.50px;font-size:12px;line-height:12px;color:#fff;letter-spacing:-0.029px;left:430px;">Überprüfen</div><div class="x" style="top:39.50px;font-size:12px;line-height:12px;color:#217346;letter-spacing:-0.003px;left:519px;">Ansicht</div><div class="x" style="top:39.50px;font-size:12px;line-height:12px;color:#dbe9e0;letter-spacing:-0.237px;left:605px;">Was möchten Sie tun?</div><div class="x" style="top:100.00px;font-size:12px;line-height:12px;color:#3a3a3a;letter-spacing:0.139px;left:4px;">Normal</div><div class="x" style="top:100.00px;font-size:12px;line-height:12px;color:#3a3a3a;letter-spacing:0.007px;left:49px;">Umbruchvorschau</div><div class="x" style="top:99.50px;font-size:12px;line-height:12px;color:#3a3a3a;letter-spacing:-0.183px;left:152px;">Seitenlayout</div><div class="x" style="top:99.70px;font-size:12px;line-height:12px;color:#3a3a3a;letter-spacing:-0.274px;left:223px;">Benutzerdef.</div><div class="x" style="top:115.70px;font-size:12px;line-height:12px;color:#3a3a3a;letter-spacing:-0.003px;left:229px;">Ansichten</div><div class="x" style="top:134.50px;font-size:12px;line-height:12px;color:#606060;letter-spacing:-0.186px;left:82px;">Arbeitsmappenansichten</div><div class="x" style="top:73.80px;font-size:12px;line-height:12px;color:#3a3a3a;letter-spacing:-0.332px;left:321px;">Lineal</div><div class="x" style="top:104.80px;font-size:12px;line-height:12px;color:#3a3a3a;letter-spacing:-0.038px;left:321px;">Gitternetzlinien</div><div class="x" style="top:73.80px;font-size:12px;line-height:12px;color:#3a3a3a;letter-spacing:-0.239px;left:429px;">Bearbeitungsleiste</div><div class="x" style="top:104.80px;font-size:12px;line-height:12px;color:#3a3a3a;letter-spacing:-0.074px;left:429px;">Überschriften</div><div class="x" style="top:134.50px;font-size:12px;line-height:12px;color:#606060;letter-spacing:-0.381px;left:392px;">Anzeigen</div><div class="x" style="top:99.80px;font-size:12px;line-height:12px;color:#3a3a3a;letter-spacing:0.107px;left:546px;">Zoom</div><div class="x" style="top:99.80px;font-size:12px;line-height:12px;color:#3a3a3a;letter-spacing:-1.307px;left:590px;">100%</div><div class="x" style="top:99.80px;font-size:12px;line-height:12px;color:#3a3a3a;letter-spacing:-0.015px;left:634px;">Auswahl</div><div class="x" style="top:115.90px;font-size:12px;line-height:12px;color:#3a3a3a;letter-spacing:-0.068px;left:627px;">vergrößern</div><div class="x" style="top:134.60px;font-size:12px;line-height:12px;color:#606060;letter-spacing:-0.693px;left:600px;">Zoom</div><div class="x" style="top:99.90px;font-size:12px;line-height:12px;color:#3a3a3a;letter-spacing:-0.597px;left:702px;">Neues</div><div class="x" style="top:115.90px;font-size:12px;line-height:12px;color:#3a3a3a;letter-spacing:-0.531px;left:699px;">Fenster</div><div class="x" style="top:99.90px;font-size:12px;line-height:12px;color:#3a3a3a;letter-spacing:-0.112px;left:758px;">Alle</div><div class="x" style="top:115.90px;font-size:12px;line-height:12px;color:#3a3a3a;letter-spacing:0.009px;left:742px;">anordnen</div><div class="x" style="top:99.90px;font-size:12px;line-height:12px;color:#a0a0a0;letter-spacing:-0.531px;left:802px;">Fenster</div><div class="x" style="top:115.90px;font-size:12px;line-height:12px;color:#a0a0a0;letter-spacing:-0.073px;left:798px;">fixieren</div><div class="x" style="top:65.80px;font-size:12px;line-height:12px;color:#3a3a3a;letter-spacing:-0.116px;left:869px;">Teilen</div><div class="x" style="top:88.30px;font-size:12px;line-height:12px;color:#3a3a3a;letter-spacing:-0.068px;left:869px;">Ausblenden</div><div class="x" style="top:111.60px;font-size:12px;line-height:12px;color:#a0a0a0;letter-spacing:-0.164px;left:869px;">Einblenden</div><div class="x" style="top:65.70px;font-size:12px;line-height:12px;color:#3a3a3a;letter-spacing:-0.097px;left:970px;">Nebeneinander anordnen</div><div class="x" style="top:88.30px;font-size:12px;line-height:12px;color:#a0a0a0;letter-spacing:-0.227px;left:970px;">Synchrones Scrollen</div><div class="x" style="top:111.60px;font-size:12px;line-height:12px;color:#a0a0a0;letter-spacing:-0.137px;left:970px;">Fensterposition zurücksetzen</div><div class="x" style="top:134.70px;font-size:12px;line-height:12px;color:#606060;letter-spacing:-0.631px;left:929px;">Fenster</div><div class="x" style="top:168.20px;font-size:12px;line-height:12px;color:#222;letter-spacing:0.549px;left:10px;">A122</div><div class="x" style="top:168.00px;font-size:12px;line-height:12px;color:#222;letter-spacing:0.046px;left:260px;">120000</div></body></html>
